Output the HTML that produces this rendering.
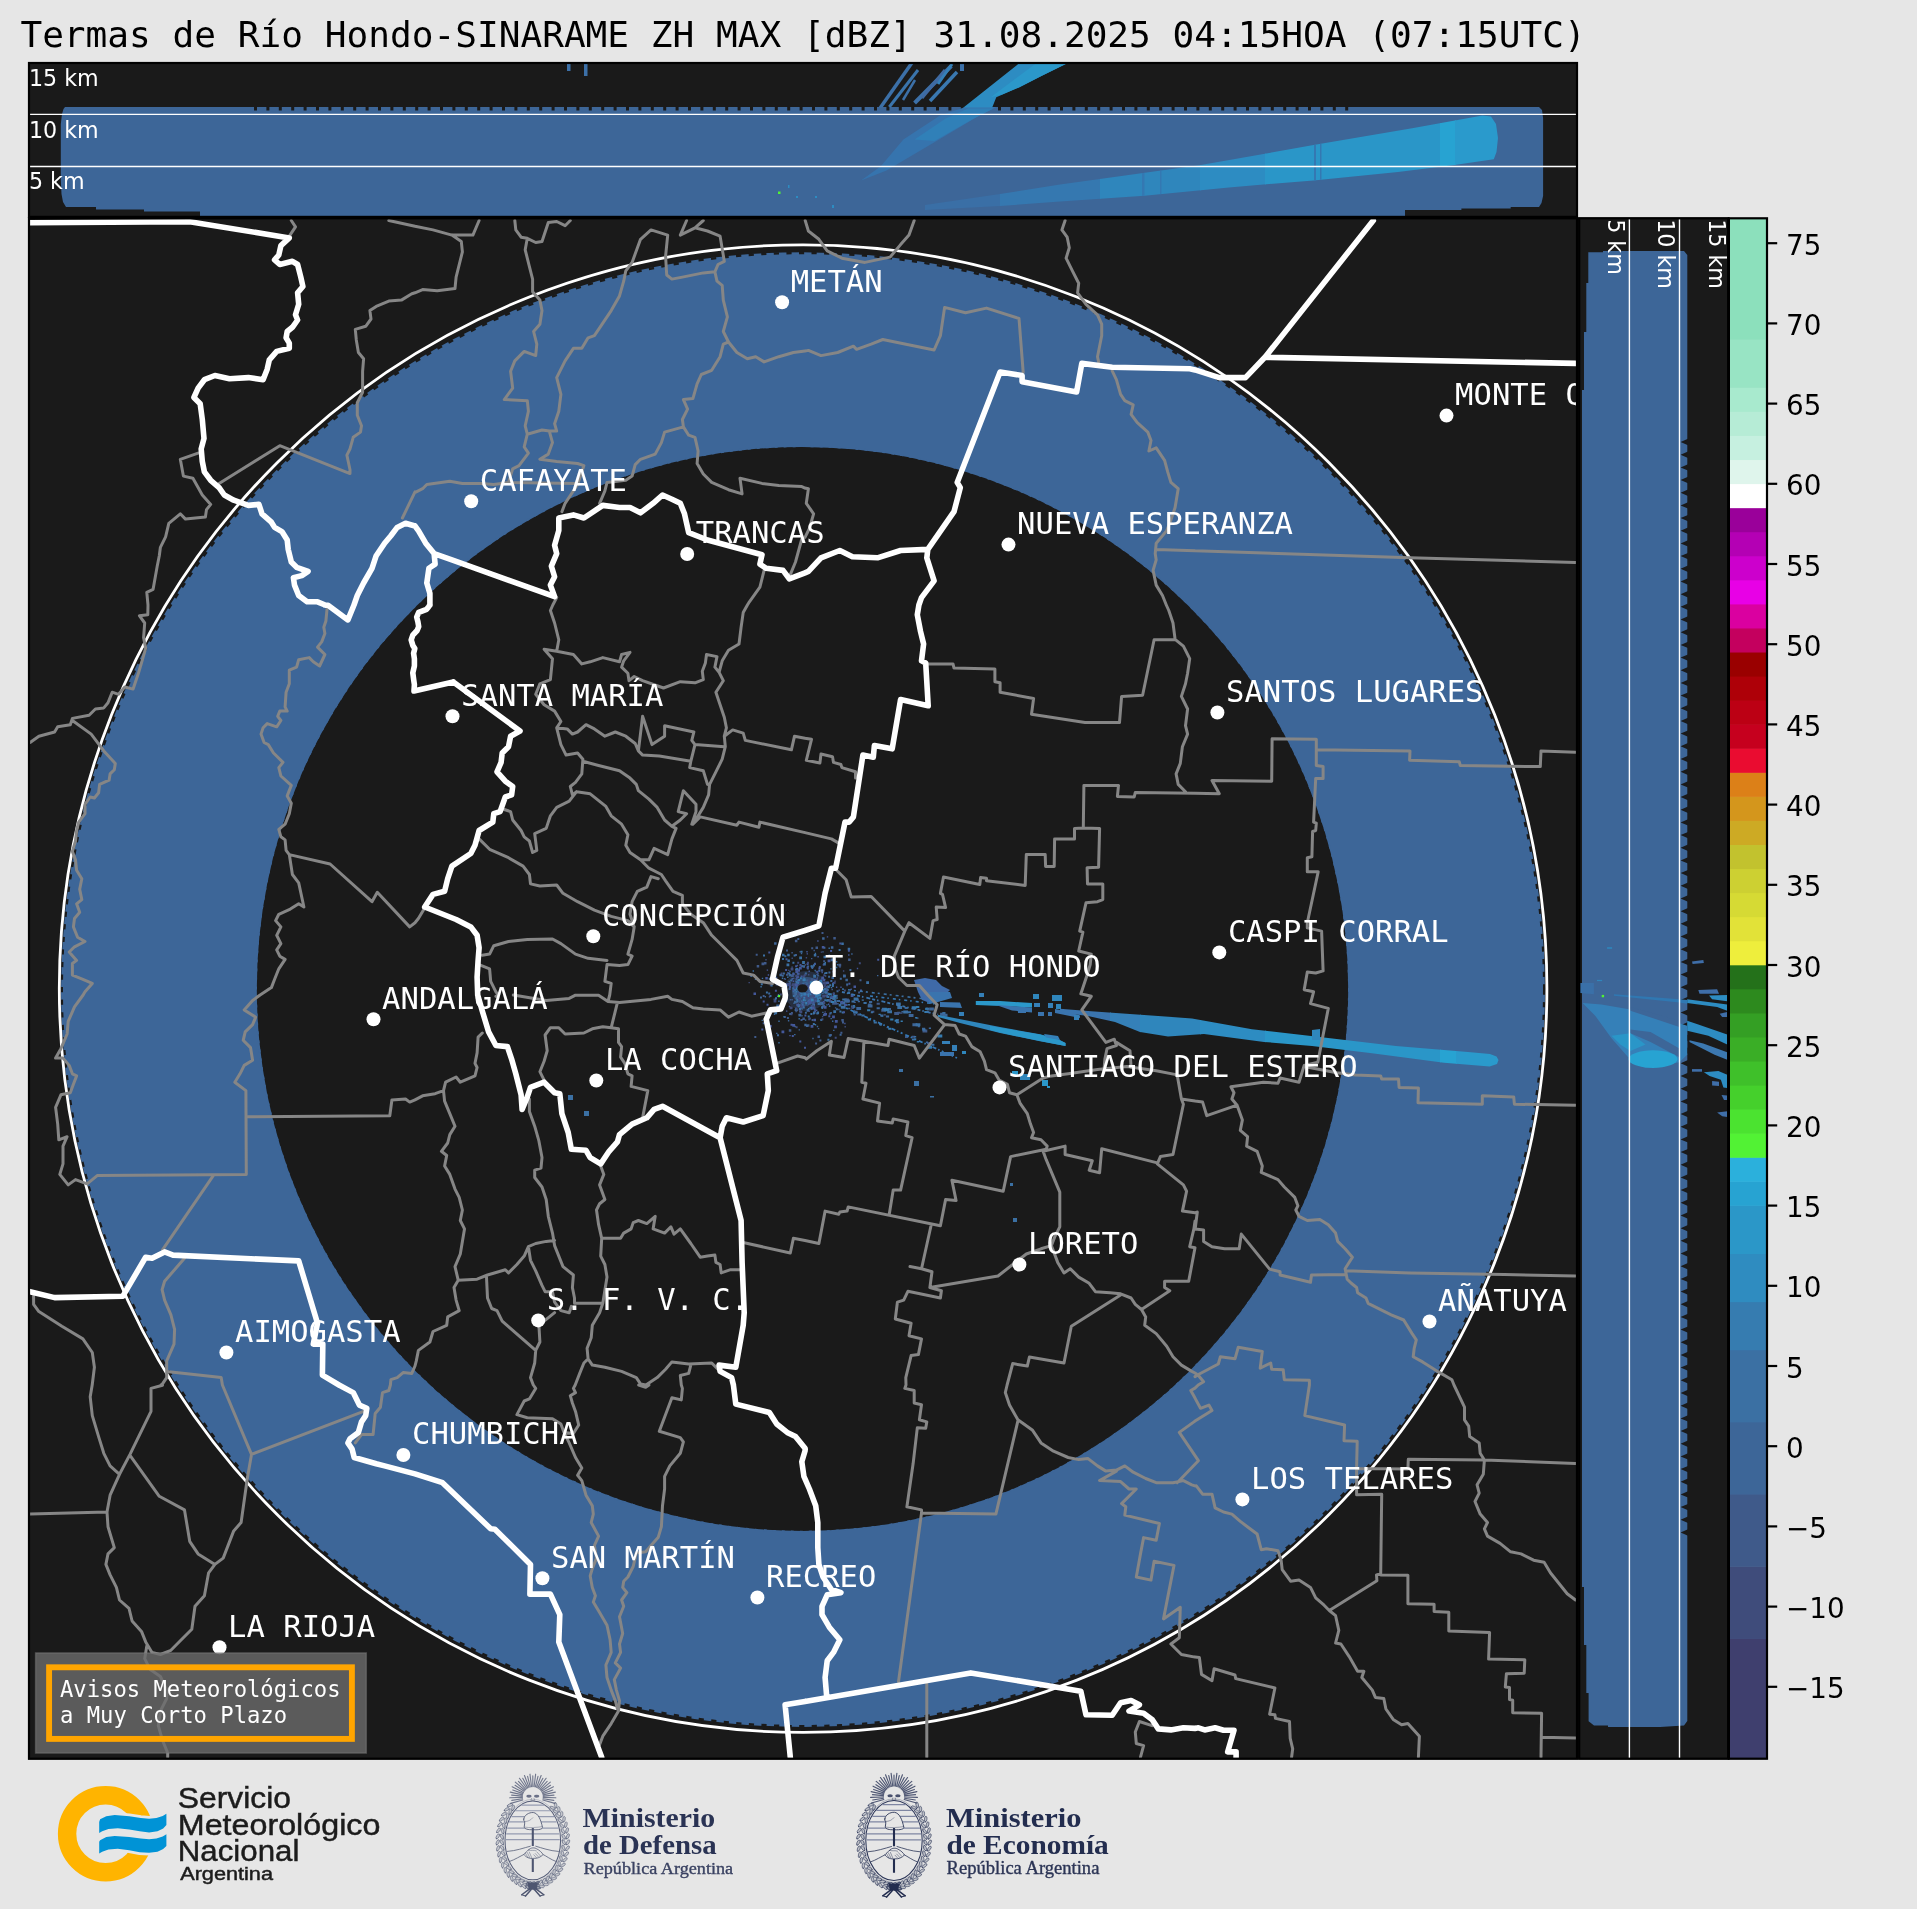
<!DOCTYPE html>
<html lang="es"><head><meta charset="utf-8"><title>Termas de Río Hondo-SINARAME ZH MAX [dBZ]</title>
<style>html,body{margin:0;padding:0;background:#e6e6e6}body{width:1917px;height:1909px;overflow:hidden}svg{display:block;will-change:transform}.mono{font-family:"DejaVu Sans Mono","Liberation Mono",monospace}.sans{font-family:"DejaVu Sans","Liberation Sans",sans-serif}.lsans{font-family:"Liberation Sans","DejaVu Sans",sans-serif}.lserif{font-family:"Liberation Serif","DejaVu Serif",serif}.city{font-size:30.56px;fill:#fff}.km{font-size:22.2px;fill:#fff}.tick{font-size:27.78px;fill:#000}</style></head><body>
<svg xmlns="http://www.w3.org/2000/svg" width="1917" height="1909" viewBox="0 0 1917 1909">
<rect width="1917" height="1909" fill="#e6e6e6"/>
<defs>
<clipPath id="cm"><rect x="29" y="218.3" width="1548" height="1540.4"/></clipPath>
<clipPath id="ct"><rect x="29" y="63" width="1548" height="154"/></clipPath>
<clipPath id="cr"><rect x="1579" y="218.3" width="150" height="1540.4"/></clipPath>
</defs>
<text class="mono" x="20.4" y="47.3" font-size="36.11" fill="#000" xml:space="preserve">Termas de Río Hondo-SINARAME ZH MAX [dBZ] 31.08.2025 04:15HOA (07:15UTC)</text>
<rect x="28" y="62" width="1550" height="156" fill="#1a1a1a"/>
<g clip-path="url(#ct)">
<polygon points="65.0,107.1 1539.0,107.1 1542.0,110.0 1543.1,118.0 1543.1,196.0 1541.5,203.0 1539.0,207.1 1510.7,207.1 1510.7,208.5 1461.4,208.5 1461.4,210.0 1405.0,210.0 1405.0,218.0 200.0,218.0 200.0,211.6 144.0,211.6 144.0,209.4 96.0,209.4 96.0,207.1 66.0,207.1 63.0,202.0 61.5,194.0 60.8,180.0 60.8,124.0 62.0,114.0 63.5,109.0" fill="#3d6698"/>
<path d="M254.0,106.5h3v4h-3zM266.4,106.5h3v4h-3zM278.8,106.5h3v4h-3zM291.2,106.5h3v4h-3zM303.6,106.5h3v4h-3zM316.0,106.5h3v4h-3zM328.4,106.5h3v4h-3zM340.8,106.5h3v4h-3zM353.2,106.5h3v4h-3zM365.6,106.5h3v4h-3zM378.0,106.5h3v4h-3zM390.4,106.5h3v4h-3zM402.8,106.5h3v4h-3zM415.2,106.5h3v4h-3zM427.6,106.5h3v4h-3zM440.0,106.5h3v4h-3zM452.4,106.5h3v4h-3zM464.8,106.5h3v4h-3zM477.2,106.5h3v4h-3zM489.6,106.5h3v4h-3zM502.0,106.5h3v4h-3zM514.4,106.5h3v4h-3zM526.8,106.5h3v4h-3zM539.2,106.5h3v4h-3zM551.6,106.5h3v4h-3zM564.0,106.5h3v4h-3zM576.4,106.5h3v4h-3zM588.8,106.5h3v4h-3zM601.2,106.5h3v4h-3zM613.6,106.5h3v4h-3zM626.0,106.5h3v4h-3zM638.4,106.5h3v4h-3zM650.8,106.5h3v4h-3zM663.2,106.5h3v4h-3zM675.6,106.5h3v4h-3zM688.0,106.5h3v4h-3zM700.4,106.5h3v4h-3zM712.8,106.5h3v4h-3zM725.2,106.5h3v4h-3zM737.6,106.5h3v4h-3zM750.0,106.5h3v4h-3zM762.4,106.5h3v4h-3zM774.8,106.5h3v4h-3zM787.2,106.5h3v4h-3zM799.6,106.5h3v4h-3zM812.0,106.5h3v4h-3zM824.4,106.5h3v4h-3zM836.8,106.5h3v4h-3zM849.2,106.5h3v4h-3zM861.6,106.5h3v4h-3zM874.0,106.5h3v4h-3zM886.4,106.5h3v4h-3zM898.8,106.5h3v4h-3zM911.2,106.5h3v4h-3zM923.6,106.5h3v4h-3zM936.0,106.5h3v4h-3zM948.4,106.5h3v4h-3zM960.8,106.5h3v4h-3zM973.2,106.5h3v4h-3zM985.6,106.5h3v4h-3zM998.0,106.5h3v4h-3zM1010.4,106.5h3v4h-3zM1022.8,106.5h3v4h-3zM1035.2,106.5h3v4h-3zM1047.6,106.5h3v4h-3zM1060.0,106.5h3v4h-3zM1072.4,106.5h3v4h-3zM1084.8,106.5h3v4h-3zM1097.2,106.5h3v4h-3zM1109.6,106.5h3v4h-3zM1122.0,106.5h3v4h-3zM1134.4,106.5h3v4h-3zM1146.8,106.5h3v4h-3zM1159.2,106.5h3v4h-3zM1171.6,106.5h3v4h-3zM1184.0,106.5h3v4h-3zM1196.4,106.5h3v4h-3zM1208.8,106.5h3v4h-3zM1221.2,106.5h3v4h-3zM1233.6,106.5h3v4h-3zM1246.0,106.5h3v4h-3zM1258.4,106.5h3v4h-3zM1270.8,106.5h3v4h-3zM1283.2,106.5h3v4h-3zM1295.6,106.5h3v4h-3zM1308.0,106.5h3v4h-3zM1320.4,106.5h3v4h-3zM1332.8,106.5h3v4h-3zM1345.2,106.5h3v4h-3z" fill="#1a1a1a"/>
<polygon points="861.1,180.4 880.8,166.3 903.4,139.5 940.0,115.6 965.4,107.1 996.3,107.1 979.4,115.6 934.4,142.3 886.5,170.5" fill="#3674ae"/>
<polygon points="914.6,139.5 945.6,118.4 968.2,108.5 993.5,108.5 973.8,118.4 934.4,140.9" fill="#3080b8"/>
<clipPath id="ctu"><rect x="29" y="63" width="1548" height="44.6"/></clipPath>
<g clip-path="url(#ctu)">
<polygon points="956.9,112.7 1018.9,63.5 1066.8,63.5 1041.4,76.1 1018.9,87.4 996.3,97.3 990.7,111.3" fill="#2d8cc2"/>
<polygon points="990.7,97.3 1024.5,71.9 1035.8,63.5 1066.8,63.5 1041.4,76.1 1018.9,87.4 1002.0,94.4" fill="#2b98ca"/>
<line x1="878.0" y1="111.0" x2="911.8" y2="63.0" stroke="#3c70a8" stroke-width="3.5"/>
<line x1="889.3" y1="107.0" x2="918.0" y2="70.0" stroke="#3a74ac" stroke-width="3.0"/>
<line x1="914.6" y1="103.0" x2="951.3" y2="66.0" stroke="#3c70a8" stroke-width="4.0"/>
<line x1="922.0" y1="98.0" x2="945.0" y2="70.0" stroke="#3f6aa2" stroke-width="3.0"/>
<line x1="930.0" y1="101.0" x2="957.0" y2="72.0" stroke="#3a78b0" stroke-width="3.5"/>
<line x1="903.0" y1="100.0" x2="915.0" y2="80.0" stroke="#3c70a8" stroke-width="2.5"/>
<line x1="938.0" y1="84.0" x2="952.0" y2="64.0" stroke="#3580b8" stroke-width="3.0"/>
<path d="M567,64h3.5v7h-3.5zM584,64h3.5v12h-3.5zM960,64h4v7h-4z" fill="#3c70a8"/>
</g>
<clipPath id="cbeam"><polygon points="925.0,205.0 1000.0,194.0 1060.0,184.6 1200.8,164.9 1313.5,145.1 1412.1,128.2 1482.5,115.6 1491.0,116.5 1496.0,124.0 1498.0,138.0 1496.5,152.0 1493.8,159.2 1454.4,164.9 1398.0,171.9 1313.5,180.4 1229.0,187.4 1144.5,195.8 1060.0,201.5 1000.0,206.0 925.0,210.0"/></clipPath>
<g clip-path="url(#cbeam)">
<rect x="920" y="100" width="81" height="120" fill="#3a6fa6"/>
<rect x="1000" y="100" width="101" height="120" fill="#3578b0"/>
<rect x="1100" y="100" width="101" height="120" fill="#2f86bc"/>
<rect x="1200" y="100" width="66" height="120" fill="#2d8cc2"/>
<rect x="1265" y="100" width="176" height="120" fill="#2a96c8"/>
<rect x="1440" y="100" width="16" height="120" fill="#27a3d2"/>
<rect x="1455" y="100" width="46" height="120" fill="#2a9acc"/>
<path d="M1142,100h2.5v120h-2.5zM1160,100h1.5v120h-1.5zM1314,100h2v120h-2zM1320,100h1.5v120h-1.5z" fill="#3478b2"/>
</g>
<rect x="778" y="191.5" width="2.5" height="2.5" fill="#52f234"/>
<path d="M832,205h2v3h-2zM788,185h1.5v3h-1.5zM796,196h2v2h-2zM815,196h2v2h-2z" fill="#2d8cc2"/>
</g>
<line x1="29" x2="1577" y1="114.4" y2="114.4" stroke="#fff" stroke-width="1.4"/>
<line x1="29" x2="1577" y1="166.5" y2="166.5" stroke="#fff" stroke-width="1.4"/>
<text class="sans km" x="28.9" y="85.6">15 km</text>
<text class="sans km" x="28.9" y="137.6">10 km</text>
<text class="sans km" x="28.9" y="189.1">5 km</text>
<rect x="28" y="217.5" width="1550" height="1542" fill="#1a1a1a"/>
<g clip-path="url(#cm)">
<path fill="#3d6698" fill-rule="evenodd" d="M61.0,989.6 a742.0,737.4 0 1,0 1484.0,0 a742.0,737.4 0 1,0 -1484.0,0 Z M256.8,988.9 a545.7,542.0 0 1,0 1091.4,0 a545.7,542.0 0 1,0 -1091.4,0 Z"/>
<ellipse cx="803" cy="989.6" rx="741.2" ry="736.6" fill="none" stroke="#1a1a1a" stroke-width="2.4" stroke-dasharray="5.2 7.4"/>
<ellipse cx="802.5" cy="988.9" rx="546.4" ry="542.7" fill="none" stroke="#3d6698" stroke-width="1.8" stroke-dasharray="3 6"/>
<ellipse cx="806" cy="991" rx="22" ry="20" fill="#3f5a8a" fill-opacity="0.35"/>
<ellipse cx="807" cy="991" rx="15" ry="14" fill="#3d6698" fill-opacity="0.6"/>
<ellipse cx="806" cy="990" rx="9" ry="8" fill="#3b70a3" fill-opacity="0.6"/>
<path d="M801.7,984.4h2.8v2.8h-2.8zM829.0,999.2h2.0v2.0h-2.0zM772.8,974.1h1.4v1.4h-1.4zM805.9,996.4h2.0v2.0h-2.0zM755.7,953.7h2.0v2.0h-2.0zM810.2,991.8h2.0v2.0h-2.0zM799.5,951.0h1.4v1.4h-1.4zM809.1,989.8h1.4v1.4h-1.4zM822.4,1004.8h2.8v2.8h-2.8zM838.4,963.8h2.8v2.8h-2.8zM800.2,1006.9h2.0v2.0h-2.0zM790.9,1012.1h2.0v2.0h-2.0zM805.3,995.0h2.8v2.8h-2.8zM813.6,991.6h2.0v2.0h-2.0zM845.6,1004.0h2.0v2.0h-2.0zM811.7,985.7h1.4v1.4h-1.4zM795.9,1001.1h2.0v2.0h-2.0zM816.4,1013.0h1.4v1.4h-1.4zM812.9,1000.6h1.4v1.4h-1.4zM821.3,978.2h1.4v1.4h-1.4zM802.5,993.4h2.0v2.0h-2.0zM796.2,1009.2h2.0v2.0h-2.0zM814.6,992.6h2.8v2.8h-2.8zM803.5,1004.7h1.4v1.4h-1.4zM799.0,1010.2h2.0v2.0h-2.0zM816.6,997.5h1.4v1.4h-1.4zM817.5,974.4h1.4v1.4h-1.4zM802.6,976.3h2.0v2.0h-2.0zM805.6,986.8h1.4v1.4h-1.4zM810.0,999.0h2.0v2.0h-2.0zM789.7,999.0h1.4v1.4h-1.4zM810.9,984.6h2.8v2.8h-2.8zM819.4,1039.5h2.0v2.0h-2.0zM817.1,1011.4h2.0v2.0h-2.0zM816.0,987.3h2.0v2.0h-2.0zM762.7,1022.3h2.0v2.0h-2.0zM798.6,1014.0h1.4v1.4h-1.4zM805.0,993.0h2.8v2.8h-2.8zM811.0,957.9h1.4v1.4h-1.4zM834.9,1007.2h1.4v1.4h-1.4zM796.4,981.6h1.4v1.4h-1.4zM788.8,982.8h2.0v2.0h-2.0zM823.1,991.2h2.0v2.0h-2.0zM818.0,999.6h1.4v1.4h-1.4zM817.0,993.7h2.0v2.0h-2.0zM815.4,971.2h1.4v1.4h-1.4zM808.3,982.9h2.8v2.8h-2.8zM810.7,978.2h2.8v2.8h-2.8zM844.5,975.3h1.4v1.4h-1.4zM803.8,986.6h2.0v2.0h-2.0zM820.5,1002.9h1.4v1.4h-1.4zM809.5,988.0h2.8v2.8h-2.8zM791.4,999.1h1.4v1.4h-1.4zM795.5,977.9h2.0v2.0h-2.0zM801.3,1015.0h1.4v1.4h-1.4zM793.4,992.3h1.4v1.4h-1.4zM810.2,987.2h2.0v2.0h-2.0zM796.4,979.1h1.4v1.4h-1.4zM804.4,998.8h2.0v2.0h-2.0zM809.9,992.4h1.4v1.4h-1.4zM811.0,965.5h2.8v2.8h-2.8zM761.5,962.4h2.8v2.8h-2.8zM815.1,1042.6h2.0v2.0h-2.0zM804.6,964.2h1.4v1.4h-1.4zM810.0,997.6h1.4v1.4h-1.4zM827.3,992.5h2.0v2.0h-2.0zM809.5,980.8h2.0v2.0h-2.0zM816.7,977.3h1.4v1.4h-1.4zM853.8,1010.2h1.4v1.4h-1.4zM786.0,973.7h2.0v2.0h-2.0zM820.0,999.1h1.4v1.4h-1.4zM791.0,974.2h2.8v2.8h-2.8zM782.2,1000.3h1.4v1.4h-1.4zM810.6,1007.9h2.0v2.0h-2.0zM813.4,964.0h1.4v1.4h-1.4zM798.9,990.1h2.0v2.0h-2.0zM815.9,986.4h2.8v2.8h-2.8zM782.9,995.3h2.0v2.0h-2.0zM754.3,1035.9h2.0v2.0h-2.0zM846.9,998.6h2.0v2.0h-2.0zM818.5,987.9h2.0v2.0h-2.0zM799.2,1003.9h2.0v2.0h-2.0zM793.0,977.7h1.4v1.4h-1.4zM809.3,985.8h2.0v2.0h-2.0zM812.0,995.6h2.0v2.0h-2.0zM808.9,984.3h1.4v1.4h-1.4zM838.2,1008.8h1.4v1.4h-1.4zM795.9,996.4h2.8v2.8h-2.8zM825.9,981.4h2.8v2.8h-2.8zM817.8,997.8h1.4v1.4h-1.4zM790.5,979.4h2.0v2.0h-2.0zM808.8,1017.5h2.0v2.0h-2.0zM820.2,997.3h2.0v2.0h-2.0zM807.1,980.0h1.4v1.4h-1.4zM811.6,997.0h1.4v1.4h-1.4zM796.0,980.9h2.0v2.0h-2.0zM824.9,975.3h1.4v1.4h-1.4zM812.8,986.3h2.0v2.0h-2.0zM809.9,995.3h2.0v2.0h-2.0zM813.3,999.7h1.4v1.4h-1.4zM813.6,980.1h2.0v2.0h-2.0zM820.0,1001.8h2.0v2.0h-2.0zM762.7,995.0h2.0v2.0h-2.0zM815.9,992.2h2.0v2.0h-2.0zM806.9,967.5h2.0v2.0h-2.0zM812.5,981.7h1.4v1.4h-1.4zM817.8,989.3h2.0v2.0h-2.0zM808.0,985.5h1.4v1.4h-1.4zM782.7,986.0h2.0v2.0h-2.0zM809.8,995.1h1.4v1.4h-1.4zM813.9,1006.8h1.4v1.4h-1.4zM801.2,985.0h2.0v2.0h-2.0zM810.1,984.7h2.0v2.0h-2.0zM796.7,964.8h1.4v1.4h-1.4zM811.0,1006.7h1.4v1.4h-1.4zM789.4,981.4h1.4v1.4h-1.4zM831.5,988.8h1.4v1.4h-1.4zM819.6,1002.4h2.8v2.8h-2.8zM841.6,943.1h1.4v1.4h-1.4zM829.7,996.6h2.5v2.5h-2.5zM848.1,958.6h2.5v2.5h-2.5zM833.3,936.9h2.5v2.5h-2.5zM787.6,972.6h1.4v1.4h-1.4zM788.8,1029.3h2.5v2.5h-2.5zM786.0,949.4h2.0v2.0h-2.0zM791.4,966.4h1.4v1.4h-1.4zM783.9,1016.1h2.0v2.0h-2.0zM795.0,954.1h2.0v2.0h-2.0zM813.1,1013.4h1.4v1.4h-1.4zM839.3,966.3h1.4v1.4h-1.4zM811.2,947.3h2.0v2.0h-2.0zM820.7,969.2h2.5v2.5h-2.5zM840.4,1031.7h2.0v2.0h-2.0zM783.9,999.8h2.5v2.5h-2.5zM794.9,939.7h2.5v2.5h-2.5zM817.9,1027.9h1.4v1.4h-1.4zM842.0,1021.5h2.0v2.0h-2.0zM817.5,1035.5h2.5v2.5h-2.5zM786.9,1017.0h2.0v2.0h-2.0zM800.5,1019.1h2.0v2.0h-2.0zM822.9,1014.0h2.0v2.0h-2.0zM797.3,938.0h2.0v2.0h-2.0zM844.6,998.3h2.5v2.5h-2.5zM829.0,1005.4h1.4v1.4h-1.4zM802.4,1017.6h2.5v2.5h-2.5zM806.9,1024.3h2.5v2.5h-2.5zM757.6,979.2h1.4v1.4h-1.4zM841.3,1019.1h2.5v2.5h-2.5zM815.5,946.4h2.5v2.5h-2.5zM853.7,1013.6h2.0v2.0h-2.0zM811.6,1019.0h2.0v2.0h-2.0zM821.5,932.1h2.0v2.0h-2.0zM813.5,949.8h1.4v1.4h-1.4zM818.8,966.1h2.0v2.0h-2.0zM764.0,962.0h2.5v2.5h-2.5zM756.7,964.9h2.5v2.5h-2.5zM858.1,991.5h2.0v2.0h-2.0zM859.5,979.2h2.0v2.0h-2.0zM791.4,952.0h1.4v1.4h-1.4zM795.4,1010.8h1.4v1.4h-1.4zM823.2,960.3h2.0v2.0h-2.0zM829.9,1034.0h2.0v2.0h-2.0zM854.4,1010.8h3.2v2.0h-3.2zM871.1,1010.8h3.2v2.0h-3.2zM911.7,1035.8h3.2v2.0h-3.2zM941.6,1013.7h2.2v1.4h-2.2zM905.0,1036.0h3.2v2.0h-3.2zM825.9,994.5h2.2v1.4h-2.2zM832.1,1001.7h4.8v3.0h-4.8zM922.5,1029.4h4.8v3.0h-4.8zM848.1,1007.8h2.2v1.4h-2.2zM894.2,1012.1h4.8v3.0h-4.8zM886.6,1026.9h2.2v1.4h-2.2zM845.2,999.4h4.8v3.0h-4.8zM853.7,1001.7h2.2v1.4h-2.2zM926.8,1042.3h3.2v2.0h-3.2zM827.0,999.1h3.2v2.0h-3.2zM834.6,994.8h3.2v2.0h-3.2zM876.6,1002.7h3.2v2.0h-3.2zM897.1,1011.8h3.2v2.0h-3.2zM900.3,1012.4h2.2v1.4h-2.2zM857.3,1013.4h3.2v2.0h-3.2zM836.5,1003.0h2.2v1.4h-2.2zM881.2,1008.7h4.8v3.0h-4.8zM832.7,995.7h3.2v2.0h-3.2zM883.6,1014.2h2.2v1.4h-2.2z" fill="#3f5a8a"/>
<path d="M797.3,998.8h2.8v2.8h-2.8zM768.7,977.8h2.0v2.0h-2.0zM797.8,989.4h2.0v2.0h-2.0zM832.0,1020.6h1.4v1.4h-1.4zM803.8,989.1h2.0v2.0h-2.0zM797.8,984.5h2.8v2.8h-2.8zM812.2,981.0h1.4v1.4h-1.4zM788.6,987.9h2.0v2.0h-2.0zM787.9,1020.1h1.4v1.4h-1.4zM813.1,982.1h1.4v1.4h-1.4zM801.2,1000.5h1.4v1.4h-1.4zM835.9,1008.2h2.0v2.0h-2.0zM812.6,985.9h2.0v2.0h-2.0zM810.3,1001.2h1.4v1.4h-1.4zM773.8,1013.7h1.4v1.4h-1.4zM807.7,999.4h2.0v2.0h-2.0zM750.3,975.0h2.0v2.0h-2.0zM830.6,958.5h2.8v2.8h-2.8zM817.3,975.0h1.4v1.4h-1.4zM812.1,988.3h2.8v2.8h-2.8zM807.9,1001.5h2.8v2.8h-2.8zM782.1,1003.6h2.8v2.8h-2.8zM809.8,989.6h1.4v1.4h-1.4zM783.2,983.3h1.4v1.4h-1.4zM795.0,968.6h2.0v2.0h-2.0zM816.2,1000.8h1.4v1.4h-1.4zM805.6,991.9h2.8v2.8h-2.8zM813.8,985.0h2.0v2.0h-2.0zM799.1,989.4h1.4v1.4h-1.4zM806.0,1025.0h2.0v2.0h-2.0zM806.6,987.8h2.0v2.0h-2.0zM804.8,987.9h2.8v2.8h-2.8zM843.0,974.6h2.8v2.8h-2.8zM810.0,998.7h2.0v2.0h-2.0zM818.4,980.8h1.4v1.4h-1.4zM813.5,993.8h2.0v2.0h-2.0zM784.7,989.3h1.4v1.4h-1.4zM815.8,987.4h2.0v2.0h-2.0zM795.0,1007.7h1.4v1.4h-1.4zM798.5,1013.7h2.8v2.8h-2.8zM797.1,995.3h1.4v1.4h-1.4zM822.2,1011.7h1.4v1.4h-1.4zM823.6,1013.4h2.0v2.0h-2.0zM806.6,994.4h1.4v1.4h-1.4zM795.0,980.4h1.4v1.4h-1.4zM794.3,992.1h2.8v2.8h-2.8zM781.7,1002.4h2.0v2.0h-2.0zM805.9,986.8h2.8v2.8h-2.8zM806.6,1008.9h2.8v2.8h-2.8zM806.4,979.6h2.0v2.0h-2.0zM776.3,1004.4h2.8v2.8h-2.8zM794.6,1009.0h2.0v2.0h-2.0zM877.0,974.9h1.4v1.4h-1.4zM807.3,993.7h2.8v2.8h-2.8zM802.7,990.1h2.0v2.0h-2.0zM828.1,975.7h2.0v2.0h-2.0zM813.8,1008.5h2.0v2.0h-2.0zM786.0,984.4h2.0v2.0h-2.0zM829.3,1012.5h2.0v2.0h-2.0zM836.5,990.3h2.0v2.0h-2.0zM777.8,993.9h1.4v1.4h-1.4zM795.6,997.6h1.4v1.4h-1.4zM793.3,1002.5h1.4v1.4h-1.4zM834.3,998.8h1.4v1.4h-1.4zM806.0,986.7h1.4v1.4h-1.4zM811.5,986.5h2.0v2.0h-2.0zM816.6,984.8h2.8v2.8h-2.8zM822.1,1005.8h1.4v1.4h-1.4zM760.0,996.4h2.0v2.0h-2.0zM826.2,986.6h2.0v2.0h-2.0zM826.1,995.5h2.0v2.0h-2.0zM800.9,1000.3h1.4v1.4h-1.4zM849.4,969.0h2.0v2.0h-2.0zM814.7,988.8h2.0v2.0h-2.0zM796.0,986.1h2.0v2.0h-2.0zM796.7,1004.0h2.8v2.8h-2.8zM839.8,977.7h2.0v2.0h-2.0zM843.4,974.5h2.0v2.0h-2.0zM826.8,989.1h2.0v2.0h-2.0zM809.7,988.2h1.4v1.4h-1.4zM818.6,1002.9h2.0v2.0h-2.0zM805.9,987.9h1.4v1.4h-1.4zM801.7,992.5h1.4v1.4h-1.4zM801.4,1008.4h1.4v1.4h-1.4zM821.7,1007.5h1.4v1.4h-1.4zM824.6,982.0h2.0v2.0h-2.0zM782.9,972.5h2.0v2.0h-2.0zM796.9,972.7h2.0v2.0h-2.0zM810.3,994.5h1.4v1.4h-1.4zM816.4,973.7h1.4v1.4h-1.4zM799.8,985.0h2.0v2.0h-2.0zM794.2,994.4h2.0v2.0h-2.0zM777.0,954.8h2.0v2.0h-2.0zM830.3,979.9h2.0v2.0h-2.0zM795.5,984.7h1.4v1.4h-1.4zM794.9,983.8h2.0v2.0h-2.0zM803.1,1001.5h1.4v1.4h-1.4zM803.2,977.6h2.0v2.0h-2.0zM794.0,1000.8h2.8v2.8h-2.8zM768.2,992.5h2.0v2.0h-2.0zM819.4,1001.7h2.0v2.0h-2.0zM815.6,994.0h1.4v1.4h-1.4zM798.6,1029.2h1.4v1.4h-1.4zM801.5,990.5h2.0v2.0h-2.0zM816.9,986.7h1.4v1.4h-1.4zM813.9,962.7h2.0v2.0h-2.0zM804.9,1011.8h2.0v2.0h-2.0zM769.5,995.0h2.0v2.0h-2.0zM764.6,996.1h1.4v1.4h-1.4zM807.1,965.5h2.0v2.0h-2.0zM822.3,951.2h1.4v1.4h-1.4zM828.7,1034.3h2.5v2.5h-2.5zM821.2,1006.3h2.0v2.0h-2.0zM789.3,970.8h1.4v1.4h-1.4zM823.4,946.7h2.0v2.0h-2.0zM773.7,972.6h2.5v2.5h-2.5zM830.5,1017.9h1.4v1.4h-1.4zM839.6,1033.7h2.0v2.0h-2.0zM774.1,942.2h2.5v2.5h-2.5zM800.8,952.9h1.4v1.4h-1.4zM831.5,976.5h2.5v2.5h-2.5zM754.8,978.7h1.4v1.4h-1.4zM833.1,1029.7h1.4v1.4h-1.4zM818.2,969.8h2.0v2.0h-2.0zM822.1,937.2h2.5v2.5h-2.5zM804.3,1023.7h2.5v2.5h-2.5zM776.8,981.4h1.4v1.4h-1.4zM789.2,1013.1h2.0v2.0h-2.0zM802.5,965.3h2.5v2.5h-2.5zM816.8,1025.8h1.4v1.4h-1.4zM827.2,982.1h2.0v2.0h-2.0zM812.3,1037.8h1.4v1.4h-1.4zM783.8,978.1h1.4v1.4h-1.4zM788.6,974.1h2.5v2.5h-2.5zM777.0,1034.3h2.0v2.0h-2.0zM811.6,967.5h1.4v1.4h-1.4zM790.5,1013.0h1.4v1.4h-1.4zM800.8,965.0h2.0v2.0h-2.0zM830.9,946.3h2.5v2.5h-2.5zM811.1,965.9h2.0v2.0h-2.0zM779.5,973.7h2.5v2.5h-2.5zM761.6,1019.7h1.4v1.4h-1.4zM828.4,971.4h2.0v2.0h-2.0zM845.4,978.8h2.5v2.5h-2.5zM851.2,953.3h1.4v1.4h-1.4zM781.8,974.7h2.0v2.0h-2.0zM776.1,1032.7h1.4v1.4h-1.4zM856.3,1006.9h4.8v3.0h-4.8zM885.9,1015.4h3.2v2.0h-3.2zM940.1,1012.8h4.8v3.0h-4.8zM908.7,1013.9h4.8v3.0h-4.8zM928.8,1027.6h2.2v1.4h-2.2zM880.1,1014.5h3.2v2.0h-3.2zM887.8,1007.9h3.2v2.0h-3.2zM917.7,1025.9h2.2v1.4h-2.2zM904.6,1006.9h3.2v2.0h-3.2zM876.6,1007.2h3.2v2.0h-3.2zM832.8,996.1h3.2v2.0h-3.2zM922.0,1027.7h3.2v2.0h-3.2zM855.5,998.8h3.2v2.0h-3.2zM916.3,1017.4h2.2v1.4h-2.2zM895.7,1018.9h3.2v2.0h-3.2zM844.3,999.6h4.8v3.0h-4.8zM857.8,1000.8h2.2v1.4h-2.2zM837.0,1000.0h3.2v2.0h-3.2zM901.4,1011.1h2.2v1.4h-2.2zM867.7,1004.4h4.8v3.0h-4.8zM925.9,1041.5h2.2v1.4h-2.2zM942.7,1013.8h4.8v3.0h-4.8zM925.6,1011.0h3.2v2.0h-3.2zM832.3,997.9h3.2v2.0h-3.2zM868.2,1003.4h3.2v2.0h-3.2zM869.0,1001.0h3.2v2.0h-3.2zM912.4,1023.3h4.8v3.0h-4.8zM929.1,1007.4h4.8v3.0h-4.8z" fill="#3d6698"/>
<path d="M812.9,964.6h2.0v2.0h-2.0zM802.5,978.2h2.8v2.8h-2.8zM770.7,984.6h2.0v2.0h-2.0zM788.5,980.8h1.4v1.4h-1.4zM791.6,978.1h1.4v1.4h-1.4zM848.1,992.6h1.4v1.4h-1.4zM821.5,988.8h1.4v1.4h-1.4zM798.5,1018.1h1.4v1.4h-1.4zM835.9,966.8h1.4v1.4h-1.4zM814.8,1024.0h1.4v1.4h-1.4zM804.9,1019.4h1.4v1.4h-1.4zM804.7,999.8h1.4v1.4h-1.4zM807.9,1007.9h1.4v1.4h-1.4zM827.4,995.9h2.0v2.0h-2.0zM792.8,994.9h2.0v2.0h-2.0zM817.6,1003.0h2.0v2.0h-2.0zM824.3,999.2h2.0v2.0h-2.0zM765.9,991.4h2.0v2.0h-2.0zM802.9,986.2h1.4v1.4h-1.4zM808.7,993.2h2.8v2.8h-2.8zM828.8,1005.4h1.4v1.4h-1.4zM817.4,989.1h1.4v1.4h-1.4zM829.2,984.2h2.0v2.0h-2.0zM824.6,991.0h2.0v2.0h-2.0zM817.0,995.4h1.4v1.4h-1.4zM821.8,990.1h2.0v2.0h-2.0zM811.7,990.5h2.0v2.0h-2.0zM826.3,1004.2h1.4v1.4h-1.4zM806.3,984.0h2.0v2.0h-2.0zM812.8,1023.1h2.0v2.0h-2.0zM793.2,995.7h1.4v1.4h-1.4zM805.9,993.8h2.0v2.0h-2.0zM807.9,997.3h1.4v1.4h-1.4zM813.8,989.2h1.4v1.4h-1.4zM808.9,984.0h1.4v1.4h-1.4zM833.3,1010.3h2.8v2.8h-2.8zM792.8,990.9h1.4v1.4h-1.4zM823.9,978.7h1.4v1.4h-1.4zM799.0,1008.0h2.0v2.0h-2.0zM812.2,1003.6h2.8v2.8h-2.8zM804.7,992.4h1.4v1.4h-1.4zM774.9,998.7h1.4v1.4h-1.4zM824.8,991.0h2.8v2.8h-2.8zM804.5,991.7h2.8v2.8h-2.8zM807.2,985.7h2.0v2.0h-2.0zM790.3,1012.9h1.4v1.4h-1.4zM808.5,987.1h2.8v2.8h-2.8zM760.4,986.0h1.4v1.4h-1.4zM812.9,1005.3h1.4v1.4h-1.4zM782.1,1004.8h1.4v1.4h-1.4zM793.6,988.8h2.8v2.8h-2.8zM792.4,961.8h2.0v2.0h-2.0zM813.1,982.8h2.0v2.0h-2.0zM796.0,980.8h2.8v2.8h-2.8zM807.3,992.9h2.0v2.0h-2.0zM810.5,965.3h2.0v2.0h-2.0zM802.4,992.7h2.0v2.0h-2.0zM800.9,1003.5h2.8v2.8h-2.8zM830.8,986.9h1.4v1.4h-1.4zM822.1,992.7h1.4v1.4h-1.4zM802.5,991.8h1.4v1.4h-1.4zM823.9,987.8h2.8v2.8h-2.8zM813.8,987.2h2.8v2.8h-2.8zM805.3,984.0h2.8v2.8h-2.8zM821.2,1006.6h2.0v2.0h-2.0zM790.3,979.5h1.4v1.4h-1.4zM798.6,1004.6h1.4v1.4h-1.4zM817.3,983.1h1.4v1.4h-1.4zM786.1,1000.2h1.4v1.4h-1.4zM813.3,974.6h1.4v1.4h-1.4zM784.4,955.3h2.0v2.0h-2.0zM812.2,990.0h2.8v2.8h-2.8zM812.9,992.4h2.0v2.0h-2.0zM807.4,993.4h1.4v1.4h-1.4zM808.8,990.4h1.4v1.4h-1.4zM814.7,952.7h1.4v1.4h-1.4zM802.1,961.1h2.8v2.8h-2.8zM836.9,964.0h1.4v1.4h-1.4zM866.2,981.2h2.8v2.8h-2.8zM793.5,988.4h1.4v1.4h-1.4zM831.9,985.1h2.0v2.0h-2.0zM796.3,999.0h2.0v2.0h-2.0zM815.0,991.1h2.0v2.0h-2.0zM804.8,972.5h2.0v2.0h-2.0zM774.3,1011.5h2.8v2.8h-2.8zM824.6,962.1h1.4v1.4h-1.4zM826.8,996.4h1.4v1.4h-1.4zM786.5,963.4h2.8v2.8h-2.8zM830.3,968.2h1.4v1.4h-1.4zM807.7,1015.6h2.0v2.0h-2.0zM809.4,1006.8h2.0v2.0h-2.0zM830.4,1012.1h1.4v1.4h-1.4zM775.0,997.3h2.0v2.0h-2.0zM811.8,985.2h2.8v2.8h-2.8zM781.8,977.6h1.4v1.4h-1.4zM782.9,991.4h2.8v2.8h-2.8zM796.7,1000.6h1.4v1.4h-1.4zM827.0,985.4h2.8v2.8h-2.8zM813.2,974.9h2.8v2.8h-2.8zM797.1,980.1h1.4v1.4h-1.4zM803.5,983.1h2.8v2.8h-2.8zM821.5,1001.9h2.8v2.8h-2.8zM799.2,956.4h2.8v2.8h-2.8zM814.5,969.8h1.4v1.4h-1.4zM815.4,993.6h1.4v1.4h-1.4zM797.9,1005.4h2.0v2.0h-2.0zM809.8,990.8h1.4v1.4h-1.4zM810.1,1006.7h2.0v2.0h-2.0zM800.5,996.2h1.4v1.4h-1.4zM802.0,1005.6h2.8v2.8h-2.8zM825.4,971.9h2.0v2.0h-2.0zM805.3,1004.3h1.4v1.4h-1.4zM792.4,987.2h2.0v2.0h-2.0zM773.5,975.2h2.8v2.8h-2.8zM828.5,947.6h1.4v1.4h-1.4zM797.0,987.6h1.4v1.4h-1.4zM778.2,1000.5h1.4v1.4h-1.4zM824.1,972.5h1.4v1.4h-1.4zM828.5,954.4h1.4v1.4h-1.4zM820.3,1019.0h2.0v2.0h-2.0zM770.8,976.9h2.0v2.0h-2.0zM847.7,947.8h2.5v2.5h-2.5zM782.0,958.0h2.0v2.0h-2.0zM838.7,1003.9h2.5v2.5h-2.5zM761.8,977.7h1.4v1.4h-1.4zM823.3,963.1h2.5v2.5h-2.5zM787.4,959.4h2.5v2.5h-2.5zM839.4,1010.6h2.0v2.0h-2.0zM760.8,983.3h2.0v2.0h-2.0zM812.9,1011.6h2.5v2.5h-2.5zM816.5,1011.8h2.5v2.5h-2.5zM832.0,983.0h2.0v2.0h-2.0zM794.4,934.2h2.0v2.0h-2.0zM841.3,942.5h2.5v2.5h-2.5zM765.1,1019.0h1.4v1.4h-1.4zM795.9,968.1h2.5v2.5h-2.5zM847.7,991.6h2.5v2.5h-2.5zM841.7,1011.6h2.0v2.0h-2.0zM838.6,948.9h2.0v2.0h-2.0zM834.1,999.5h2.5v2.5h-2.5zM752.6,970.3h1.4v1.4h-1.4zM826.3,999.2h2.5v2.5h-2.5zM810.4,1012.9h2.0v2.0h-2.0zM787.2,953.7h2.5v2.5h-2.5zM778.3,1042.1h1.4v1.4h-1.4zM800.6,950.7h2.0v2.0h-2.0zM776.9,995.5h1.4v1.4h-1.4zM787.1,976.5h1.4v1.4h-1.4zM783.3,1016.0h1.4v1.4h-1.4zM793.6,954.4h2.0v2.0h-2.0zM787.4,959.6h1.4v1.4h-1.4zM792.4,972.5h2.0v2.0h-2.0zM778.3,1020.6h1.4v1.4h-1.4zM823.5,955.7h2.5v2.5h-2.5zM813.8,953.9h2.5v2.5h-2.5zM794.5,1025.8h1.4v1.4h-1.4zM794.1,1033.9h1.4v1.4h-1.4zM827.4,1038.8h2.0v2.0h-2.0zM768.1,1034.4h1.4v1.4h-1.4zM763.0,954.4h2.0v2.0h-2.0zM782.0,953.7h2.5v2.5h-2.5zM788.3,972.5h2.0v2.0h-2.0zM846.2,983.5h2.0v2.0h-2.0zM835.9,961.0h1.4v1.4h-1.4zM879.0,1023.0h3.2v2.0h-3.2zM840.8,1005.8h4.8v3.0h-4.8zM926.9,1007.9h2.2v1.4h-2.2zM840.2,1001.4h4.8v3.0h-4.8zM851.5,1000.5h3.2v2.0h-3.2zM896.0,1002.5h4.8v3.0h-4.8zM925.5,1007.5h3.2v2.0h-3.2zM931.2,1043.8h3.2v2.0h-3.2zM870.8,1011.8h2.2v1.4h-2.2zM847.8,1004.1h2.2v1.4h-2.2zM896.0,1021.3h3.2v2.0h-3.2zM830.6,995.9h4.8v3.0h-4.8zM911.9,1038.6h3.2v2.0h-3.2zM914.0,1036.1h2.2v1.4h-2.2zM861.4,1014.6h3.2v2.0h-3.2zM852.9,1005.0h2.2v1.4h-2.2zM897.3,1006.1h4.8v3.0h-4.8zM907.8,1011.3h3.2v2.0h-3.2zM831.1,996.3h3.2v2.0h-3.2zM842.2,998.5h3.2v2.0h-3.2zM879.6,1024.3h2.2v1.4h-2.2zM926.7,1009.1h2.2v1.4h-2.2zM942.3,1011.9h3.2v2.0h-3.2zM835.7,997.3h2.2v1.4h-2.2zM881.1,1015.4h2.2v1.4h-2.2zM873.7,1021.6h3.2v2.0h-3.2zM915.6,1023.2h4.8v3.0h-4.8zM851.1,1005.5h3.2v2.0h-3.2zM887.2,1010.3h4.8v3.0h-4.8zM861.7,999.4h2.2v1.4h-2.2zM863.5,1002.1h3.2v2.0h-3.2zM922.3,1028.7h3.2v2.0h-3.2zM903.2,1010.5h4.8v3.0h-4.8zM853.6,997.5h4.8v3.0h-4.8zM882.0,1007.8h4.8v3.0h-4.8zM853.1,1011.6h3.2v2.0h-3.2z" fill="#3b70a3"/>
<path d="M801.4,984.7h2.8v2.8h-2.8zM792.3,1023.9h2.8v2.8h-2.8zM840.5,1001.0h2.8v2.8h-2.8zM813.7,996.2h2.0v2.0h-2.0zM813.6,987.1h2.8v2.8h-2.8zM815.6,983.2h2.0v2.0h-2.0zM828.4,993.6h2.0v2.0h-2.0zM808.5,994.0h2.0v2.0h-2.0zM818.4,967.5h2.0v2.0h-2.0zM813.8,978.8h2.0v2.0h-2.0zM795.3,970.3h2.8v2.8h-2.8zM786.0,1010.4h1.4v1.4h-1.4zM812.5,1001.9h2.0v2.0h-2.0zM812.0,1006.5h2.8v2.8h-2.8zM804.9,989.1h1.4v1.4h-1.4zM810.9,987.3h2.0v2.0h-2.0zM834.9,1020.0h2.8v2.8h-2.8zM835.9,986.6h1.4v1.4h-1.4zM807.3,992.6h1.4v1.4h-1.4zM839.3,942.4h2.0v2.0h-2.0zM808.7,987.6h2.8v2.8h-2.8zM832.1,1015.4h2.8v2.8h-2.8zM804.8,984.9h2.0v2.0h-2.0zM810.7,1005.3h1.4v1.4h-1.4zM848.4,982.8h2.0v2.0h-2.0zM796.4,1004.1h2.0v2.0h-2.0zM796.1,975.5h2.8v2.8h-2.8zM814.1,1010.3h2.0v2.0h-2.0zM788.8,1005.8h1.4v1.4h-1.4zM799.3,1040.6h2.0v2.0h-2.0zM819.5,986.0h2.8v2.8h-2.8zM806.8,985.6h1.4v1.4h-1.4zM802.3,1004.8h1.4v1.4h-1.4zM781.5,1030.4h2.8v2.8h-2.8zM799.0,966.7h2.8v2.8h-2.8zM817.3,972.5h1.4v1.4h-1.4zM819.1,984.8h1.4v1.4h-1.4zM802.7,986.4h2.0v2.0h-2.0zM817.0,990.2h1.4v1.4h-1.4zM791.8,978.0h1.4v1.4h-1.4zM793.2,986.5h1.4v1.4h-1.4zM808.2,1001.3h2.0v2.0h-2.0zM810.0,1001.5h1.4v1.4h-1.4zM796.7,988.5h1.4v1.4h-1.4zM787.0,972.2h1.4v1.4h-1.4zM785.6,983.5h2.0v2.0h-2.0zM832.7,993.1h2.0v2.0h-2.0zM828.3,1015.2h2.0v2.0h-2.0zM819.7,979.5h2.8v2.8h-2.8zM789.0,986.0h2.0v2.0h-2.0zM821.3,976.4h2.8v2.8h-2.8zM775.9,977.1h1.4v1.4h-1.4zM808.5,970.6h1.4v1.4h-1.4zM804.5,992.3h1.4v1.4h-1.4zM822.7,964.1h1.4v1.4h-1.4zM774.9,960.7h2.0v2.0h-2.0zM800.6,975.4h2.0v2.0h-2.0zM799.5,964.1h2.0v2.0h-2.0zM805.0,987.9h2.0v2.0h-2.0zM819.6,984.5h1.4v1.4h-1.4zM816.1,970.7h2.0v2.0h-2.0zM838.5,989.4h1.4v1.4h-1.4zM804.4,1014.5h2.0v2.0h-2.0zM823.2,979.1h2.0v2.0h-2.0zM833.4,970.1h2.0v2.0h-2.0zM823.9,1012.9h2.8v2.8h-2.8zM797.6,972.7h2.0v2.0h-2.0zM811.4,1000.4h1.4v1.4h-1.4zM767.7,974.3h1.4v1.4h-1.4zM832.6,981.9h2.0v2.0h-2.0zM797.6,980.7h2.0v2.0h-2.0zM784.3,1000.6h2.0v2.0h-2.0zM823.8,1006.0h2.8v2.8h-2.8zM810.5,1000.9h1.4v1.4h-1.4zM816.5,991.2h2.8v2.8h-2.8zM804.4,988.7h2.0v2.0h-2.0zM816.2,978.5h1.4v1.4h-1.4zM801.6,987.4h2.0v2.0h-2.0zM810.6,1024.9h2.8v2.8h-2.8zM827.6,959.5h2.8v2.8h-2.8zM800.2,985.1h1.4v1.4h-1.4zM807.7,1003.4h1.4v1.4h-1.4zM824.3,984.3h1.4v1.4h-1.4zM822.6,1001.0h2.0v2.0h-2.0zM877.2,958.7h2.0v2.0h-2.0zM809.5,985.0h1.4v1.4h-1.4zM795.1,983.6h2.8v2.8h-2.8zM806.6,953.2h1.4v1.4h-1.4zM850.7,994.1h2.8v2.8h-2.8zM808.7,1001.0h2.8v2.8h-2.8zM856.8,967.8h1.4v1.4h-1.4zM808.5,985.1h2.0v2.0h-2.0zM792.6,973.0h2.0v2.0h-2.0zM823.1,978.9h2.0v2.0h-2.0zM804.4,993.5h2.8v2.8h-2.8zM766.5,1003.7h2.0v2.0h-2.0zM819.2,980.4h2.0v2.0h-2.0zM792.8,980.6h1.4v1.4h-1.4zM809.0,999.1h2.8v2.8h-2.8zM825.0,1013.1h2.0v2.0h-2.0zM793.8,984.0h1.4v1.4h-1.4zM807.3,986.7h2.0v2.0h-2.0zM820.5,982.8h2.0v2.0h-2.0zM806.2,987.2h2.0v2.0h-2.0zM814.5,999.5h2.0v2.0h-2.0zM787.4,983.3h2.8v2.8h-2.8zM798.7,997.8h2.0v2.0h-2.0zM795.2,965.3h2.0v2.0h-2.0zM817.2,940.3h1.4v1.4h-1.4zM829.1,1000.6h2.0v2.0h-2.0zM768.3,951.6h2.0v2.0h-2.0zM801.7,1001.6h2.0v2.0h-2.0zM801.2,988.4h2.0v2.0h-2.0zM840.3,986.5h1.4v1.4h-1.4zM813.3,992.0h1.4v1.4h-1.4zM816.2,991.4h2.8v2.8h-2.8zM798.8,991.7h1.4v1.4h-1.4zM825.4,989.8h2.0v2.0h-2.0zM818.4,990.8h1.4v1.4h-1.4zM809.9,987.8h2.0v2.0h-2.0zM831.0,995.9h2.0v2.0h-2.0zM817.1,983.9h2.0v2.0h-2.0zM807.1,1001.0h1.4v1.4h-1.4zM831.0,995.7h2.0v2.0h-2.0zM834.1,1025.5h2.8v2.8h-2.8zM792.7,989.8h1.4v1.4h-1.4zM797.5,969.3h2.5v2.5h-2.5zM765.3,977.1h2.5v2.5h-2.5zM790.5,1023.8h2.0v2.0h-2.0zM761.3,1028.4h2.0v2.0h-2.0zM774.9,989.8h2.0v2.0h-2.0zM771.1,976.5h2.5v2.5h-2.5zM850.5,988.5h1.4v1.4h-1.4zM785.7,933.7h2.0v2.0h-2.0zM804.0,1046.8h2.0v2.0h-2.0zM806.5,966.4h2.0v2.0h-2.0zM769.2,1024.9h2.5v2.5h-2.5zM762.7,1000.4h2.0v2.0h-2.0zM768.8,996.2h1.4v1.4h-1.4zM828.0,1003.6h1.4v1.4h-1.4zM844.0,1003.6h2.5v2.5h-2.5zM791.8,1035.0h2.0v2.0h-2.0zM789.3,1034.9h1.4v1.4h-1.4zM817.4,956.0h1.4v1.4h-1.4zM813.5,1018.7h2.5v2.5h-2.5zM821.5,971.9h1.4v1.4h-1.4zM785.5,958.3h2.0v2.0h-2.0zM814.5,963.6h1.4v1.4h-1.4zM844.2,1022.8h1.4v1.4h-1.4zM860.0,989.4h2.0v2.0h-2.0zM826.9,981.8h2.0v2.0h-2.0zM785.1,969.1h2.0v2.0h-2.0zM753.5,992.5h2.5v2.5h-2.5zM830.1,949.9h2.0v2.0h-2.0zM847.9,949.7h2.0v2.0h-2.0zM843.0,1011.3h2.0v2.0h-2.0zM795.1,965.7h1.4v1.4h-1.4zM816.0,1009.6h1.4v1.4h-1.4zM853.5,985.4h2.5v2.5h-2.5zM806.6,962.9h2.0v2.0h-2.0zM768.3,1034.6h2.5v2.5h-2.5zM826.8,936.2h1.4v1.4h-1.4zM848.1,954.3h1.4v1.4h-1.4zM806.3,951.0h1.4v1.4h-1.4zM766.7,969.4h1.4v1.4h-1.4zM774.2,980.9h2.0v2.0h-2.0zM821.8,946.1h2.5v2.5h-2.5z" fill="#44589a"/>
<path d="M781.0,980.4h1.4v1.4h-1.4zM798.2,986.4h1.4v1.4h-1.4zM814.7,987.3h1.4v1.4h-1.4zM787.5,983.8h2.0v2.0h-2.0zM765.3,959.1h1.4v1.4h-1.4zM798.2,998.8h2.0v2.0h-2.0zM823.9,985.6h1.4v1.4h-1.4zM828.8,1013.4h1.4v1.4h-1.4zM790.6,967.8h2.8v2.8h-2.8zM844.5,1026.1h1.4v1.4h-1.4zM807.0,1002.4h1.4v1.4h-1.4zM811.2,992.9h1.4v1.4h-1.4zM822.2,994.8h2.8v2.8h-2.8zM812.6,991.5h2.0v2.0h-2.0zM851.4,1006.1h2.8v2.8h-2.8zM798.4,989.3h2.0v2.0h-2.0zM833.7,981.7h2.0v2.0h-2.0zM795.5,1007.6h2.0v2.0h-2.0zM809.7,994.8h2.0v2.0h-2.0zM805.8,995.5h2.0v2.0h-2.0zM804.7,995.6h2.8v2.8h-2.8zM812.2,994.2h2.8v2.8h-2.8zM803.5,990.7h2.8v2.8h-2.8zM808.2,1018.2h2.0v2.0h-2.0zM797.1,988.3h1.4v1.4h-1.4zM811.0,984.7h2.8v2.8h-2.8zM800.5,982.5h1.4v1.4h-1.4zM830.4,1000.0h2.0v2.0h-2.0zM800.0,994.0h2.0v2.0h-2.0zM808.2,983.4h2.0v2.0h-2.0zM784.7,978.6h1.4v1.4h-1.4zM832.3,971.0h1.4v1.4h-1.4zM815.8,985.8h1.4v1.4h-1.4zM808.0,974.0h1.4v1.4h-1.4zM782.6,1004.8h2.0v2.0h-2.0zM834.7,1036.7h2.0v2.0h-2.0zM822.6,995.9h1.4v1.4h-1.4zM804.4,996.4h1.4v1.4h-1.4zM830.8,995.2h1.4v1.4h-1.4zM846.4,984.8h1.4v1.4h-1.4zM821.4,1018.2h2.0v2.0h-2.0zM822.9,982.3h2.0v2.0h-2.0zM795.6,1026.2h2.0v2.0h-2.0zM798.2,984.1h2.8v2.8h-2.8zM834.4,980.6h1.4v1.4h-1.4zM804.6,987.6h2.0v2.0h-2.0zM814.3,984.2h1.4v1.4h-1.4zM780.7,972.4h2.0v2.0h-2.0zM799.5,1010.5h2.8v2.8h-2.8zM788.1,969.7h1.4v1.4h-1.4zM799.8,1004.1h2.0v2.0h-2.0zM800.9,995.3h1.4v1.4h-1.4zM824.5,1011.3h1.4v1.4h-1.4zM804.3,996.2h2.0v2.0h-2.0zM818.4,990.8h2.0v2.0h-2.0zM817.4,985.5h2.0v2.0h-2.0zM806.4,994.8h2.0v2.0h-2.0zM842.9,970.3h1.4v1.4h-1.4zM802.6,978.2h1.4v1.4h-1.4zM780.4,1007.8h2.0v2.0h-2.0zM823.3,1002.0h2.0v2.0h-2.0zM807.5,979.5h2.8v2.8h-2.8zM813.8,983.4h2.0v2.0h-2.0zM800.1,965.2h1.4v1.4h-1.4zM804.2,973.7h2.0v2.0h-2.0zM772.2,976.4h1.4v1.4h-1.4zM832.8,992.2h2.0v2.0h-2.0zM834.1,969.3h1.4v1.4h-1.4zM815.2,988.3h1.4v1.4h-1.4zM797.2,961.7h2.0v2.0h-2.0zM798.1,992.4h1.4v1.4h-1.4zM811.4,998.3h1.4v1.4h-1.4zM806.9,987.2h1.4v1.4h-1.4zM800.2,1005.7h2.0v2.0h-2.0zM806.8,996.2h2.8v2.8h-2.8zM811.7,991.8h2.8v2.8h-2.8zM805.0,1002.2h1.4v1.4h-1.4zM806.4,986.5h2.0v2.0h-2.0zM783.8,1002.0h2.0v2.0h-2.0zM802.2,996.0h2.8v2.8h-2.8zM793.8,986.8h2.0v2.0h-2.0zM775.7,982.6h2.8v2.8h-2.8zM773.5,998.6h1.4v1.4h-1.4zM769.8,984.8h1.4v1.4h-1.4zM791.9,983.2h2.8v2.8h-2.8zM843.9,989.4h2.0v2.0h-2.0zM813.4,998.5h2.0v2.0h-2.0zM806.7,984.5h1.4v1.4h-1.4zM808.6,1010.7h1.4v1.4h-1.4zM825.7,986.1h2.0v2.0h-2.0zM804.2,983.2h2.0v2.0h-2.0zM823.3,974.3h2.0v2.0h-2.0zM789.6,1006.5h2.8v2.8h-2.8zM814.0,1006.4h1.4v1.4h-1.4zM805.7,957.0h1.4v1.4h-1.4zM811.4,993.9h1.4v1.4h-1.4zM806.0,995.5h1.4v1.4h-1.4zM823.3,981.4h2.8v2.8h-2.8zM809.2,981.5h2.0v2.0h-2.0zM807.0,961.7h2.0v2.0h-2.0zM824.4,994.8h2.0v2.0h-2.0zM821.9,1015.9h1.4v1.4h-1.4zM803.9,1005.3h1.4v1.4h-1.4zM791.3,1007.2h1.4v1.4h-1.4zM797.3,993.5h2.0v2.0h-2.0zM812.4,1004.8h2.0v2.0h-2.0zM858.8,962.3h2.0v2.0h-2.0zM774.4,978.9h2.0v2.0h-2.0zM806.6,993.2h1.4v1.4h-1.4zM777.5,982.8h2.8v2.8h-2.8zM791.5,957.6h1.4v1.4h-1.4zM790.1,984.6h1.4v1.4h-1.4zM779.2,1009.3h1.4v1.4h-1.4zM779.8,993.6h2.0v2.0h-2.0zM797.5,1002.7h1.4v1.4h-1.4zM820.7,951.4h1.4v1.4h-1.4zM773.6,999.7h2.8v2.8h-2.8zM790.5,1013.3h2.0v2.0h-2.0zM815.6,989.6h2.8v2.8h-2.8zM800.0,986.7h1.4v1.4h-1.4zM800.8,1006.1h2.0v2.0h-2.0zM797.7,997.6h1.4v1.4h-1.4zM815.5,993.8h1.4v1.4h-1.4zM807.1,1004.9h1.4v1.4h-1.4zM795.3,974.9h2.0v2.0h-2.0zM804.6,991.6h2.8v2.8h-2.8zM803.3,974.7h2.0v2.0h-2.0zM833.9,970.9h1.4v1.4h-1.4zM748.5,981.9h1.4v1.4h-1.4z" fill="#3f4c7b"/>
<path d="M810.1,984.0h1.4v1.4h-1.4zM805.2,1001.9h2.0v2.0h-2.0zM802.8,978.4h2.8v2.8h-2.8zM800.5,994.6h2.0v2.0h-2.0zM795.7,990.9h1.4v1.4h-1.4zM811.1,983.1h2.0v2.0h-2.0zM813.4,992.9h2.0v2.0h-2.0zM801.7,990.2h2.8v2.8h-2.8zM803.3,988.3h2.8v2.8h-2.8zM812.1,991.8h1.4v1.4h-1.4zM811.5,983.5h1.4v1.4h-1.4zM805.1,993.9h1.4v1.4h-1.4zM812.0,986.4h2.8v2.8h-2.8zM800.0,988.4h2.0v2.0h-2.0zM815.1,984.9h2.0v2.0h-2.0zM816.6,992.7h2.0v2.0h-2.0zM819.3,980.1h2.8v2.8h-2.8zM802.8,999.0h2.0v2.0h-2.0zM797.5,982.3h1.4v1.4h-1.4zM810.6,990.7h1.4v1.4h-1.4zM812.4,990.5h1.4v1.4h-1.4zM817.0,999.8h2.8v2.8h-2.8zM809.4,986.1h2.0v2.0h-2.0zM819.2,997.1h2.0v2.0h-2.0zM804.9,990.3h1.4v1.4h-1.4zM803.6,992.8h2.8v2.8h-2.8zM796.0,987.8h2.0v2.0h-2.0zM815.1,994.7h2.8v2.8h-2.8zM812.0,987.9h1.4v1.4h-1.4zM818.0,993.6h2.8v2.8h-2.8zM820.4,982.6h2.0v2.0h-2.0zM802.0,987.8h1.4v1.4h-1.4zM810.9,988.0h2.0v2.0h-2.0zM817.1,997.5h2.0v2.0h-2.0zM803.3,996.8h2.0v2.0h-2.0zM804.3,989.7h2.0v2.0h-2.0zM813.6,988.2h2.0v2.0h-2.0zM800.4,992.9h1.4v1.4h-1.4zM816.9,989.4h1.4v1.4h-1.4zM811.8,985.3h2.0v2.0h-2.0zM810.9,998.5h2.8v2.8h-2.8zM809.8,981.3h2.8v2.8h-2.8zM822.1,989.0h2.0v2.0h-2.0zM810.0,993.9h1.4v1.4h-1.4zM807.5,993.6h1.4v1.4h-1.4zM814.1,980.6h1.4v1.4h-1.4zM798.1,979.0h2.0v2.0h-2.0zM800.9,987.5h2.0v2.0h-2.0zM807.3,993.5h2.0v2.0h-2.0zM807.7,995.5h1.4v1.4h-1.4zM799.8,977.2h2.0v2.0h-2.0zM888.2,1027.8h3.2v2.0h-3.2zM924.3,1010.9h3.2v2.0h-3.2zM867.8,1018.5h3.2v2.0h-3.2zM884.1,1008.3h4.8v3.0h-4.8zM890.2,1018.5h3.2v2.0h-3.2zM894.6,1019.7h3.2v2.0h-3.2zM828.6,993.2h3.2v2.0h-3.2zM911.7,1006.3h4.8v3.0h-4.8zM937.5,1034.5h4.8v3.0h-4.8zM927.3,1045.7h4.8v3.0h-4.8zM827.9,993.7h2.2v1.4h-2.2zM900.6,1020.5h2.2v1.4h-2.2zM867.1,1009.3h3.2v2.0h-3.2zM933.8,1011.4h2.2v1.4h-2.2zM916.8,1041.0h2.2v1.4h-2.2zM915.1,1017.1h2.2v1.4h-2.2zM833.3,994.9h3.2v2.0h-3.2zM853.1,1006.3h2.2v1.4h-2.2zM925.0,1008.3h2.2v1.4h-2.2zM916.1,1006.1h3.2v2.0h-3.2zM878.5,1013.7h2.2v1.4h-2.2zM830.8,1001.1h3.2v2.0h-3.2z" fill="#367cb0"/>
<ellipse cx="802.6" cy="988.4" rx="5.2" ry="4.2" fill="#1a1a1a"/>
<rect x="778" y="995" width="2.2" height="2.2" fill="#52f234"/>
<polygon points="914.0,980.0 925.0,978.0 936.0,980.0 942.0,986.0 950.0,990.0 946.0,994.0 936.0,997.0 930.0,1003.0 922.0,1000.0 918.0,992.0" fill="#3f6aa8"/>
<polygon points="926.0,992.0 950.0,992.0 952.0,998.0 938.0,1002.0 930.0,1004.0" fill="#3a74ae"/>
<line x1="842.0" y1="992.0" x2="938.0" y2="1014.5" stroke="#3b74ac" stroke-width="1.8" stroke-dasharray="3 2 1.5 3 4 2"/>
<line x1="846.0" y1="1008.0" x2="957.0" y2="1058.0" stroke="#3578b4" stroke-width="1.8" stroke-dasharray="2 3 4 2 1.5 2.5"/>
<line x1="842.0" y1="989.0" x2="925.0" y2="999.0" stroke="#3b70a3" stroke-width="1.6" stroke-dasharray="2 4 3 3"/>
<line x1="870.0" y1="996.0" x2="936.0" y2="1004.0" stroke="#3578b4" stroke-width="1.6" stroke-dasharray="3 3 1.5 4"/>
<polygon points="938.0,1014.8 1000.0,1027.0 1040.0,1034.2 1058.0,1039.0 1065.5,1043.0 1065.5,1046.0 1040.0,1041.2 1000.0,1033.0 960.0,1023.0 938.0,1017.0" fill="#2f86bc"/>
<polygon points="990.0,1026.0 1040.0,1034.6 1058.0,1039.4 1065.5,1043.0 1065.5,1046.0 1040.0,1041.0 1000.0,1032.6 990.0,1030.0" fill="#2b98ca"/>
<polygon points="1044.0,1034.0 1058.0,1036.0 1060.0,1040.0 1046.0,1037.5" fill="#3580b8"/>
<polygon points="975.8,1001.0 1000.0,1001.0 1032.0,1003.0 1032.0,1007.5 1000.0,1006.0 975.8,1005.0" fill="#2b98ca"/>
<polygon points="996.0,1005.0 1032.0,1007.5 1032.0,1012.5 1012.0,1010.5" fill="#3a74ae"/>
<polygon points="940.0,1002.0 960.0,1002.5 962.0,1008.0 940.0,1007.0" fill="#3a74ae"/>
<polygon points="1055.0,1009.0 1066.0,1011.0 1080.0,1015.5 1080.0,1018.0 1055.0,1013.0" fill="#3a74ae"/>
<rect x="979.0" y="993.0" width="5.0" height="4.0" fill="#3580b8"/>
<rect x="1033.0" y="994.0" width="6.0" height="5.0" fill="#2f86bc"/>
<rect x="1052.0" y="995.0" width="10.0" height="6.0" fill="#2f86bc"/>
<rect x="1034.0" y="1003.0" width="6.0" height="4.0" fill="#3580b8"/>
<rect x="1048.0" y="1003.0" width="5.0" height="5.0" fill="#3580b8"/>
<rect x="1056.0" y="1004.0" width="5.0" height="5.0" fill="#2f86bc"/>
<rect x="1018.0" y="1009.0" width="8.0" height="4.0" fill="#3a74ae"/>
<rect x="1038.0" y="1012.0" width="6.0" height="4.0" fill="#3a74ae"/>
<rect x="1048.0" y="1012.0" width="4.0" height="4.0" fill="#3a74ae"/>
<rect x="1074.0" y="1015.0" width="5.0" height="5.0" fill="#3580b8"/>
<rect x="959.0" y="1012.0" width="5.0" height="4.0" fill="#3580b8"/>
<rect x="942.0" y="1041.0" width="8.0" height="3.0" fill="#3580b8"/>
<rect x="952.0" y="1045.0" width="5.0" height="6.0" fill="#3580b8"/>
<rect x="940.0" y="1052.0" width="14.0" height="4.0" fill="#3a74ae"/>
<rect x="962.0" y="1051.0" width="4.0" height="3.0" fill="#2f86bc"/>
<rect x="1012.0" y="1071.0" width="6.0" height="4.0" fill="#2b98ca"/>
<rect x="1020.0" y="1074.0" width="10.0" height="6.0" fill="#2f86bc"/>
<rect x="1042.0" y="1080.0" width="6.0" height="6.0" fill="#2b98ca"/>
<rect x="1047.0" y="1086.0" width="3.0" height="2.0" fill="#2b98ca"/>
<rect x="899.0" y="1069.0" width="3.0" height="3.0" fill="#3b70a3"/>
<rect x="914.0" y="1081.0" width="5.0" height="5.0" fill="#3b70a3"/>
<rect x="930.0" y="1096.0" width="4.0" height="1.5" fill="#3b70a3"/>
<rect x="568.0" y="1095.0" width="5.0" height="5.0" fill="#3b70a3"/>
<rect x="584.0" y="1111.0" width="5.0" height="5.0" fill="#3b70a3"/>
<rect x="900.0" y="1069.0" width="3.0" height="3.0" fill="#3b70a3"/>
<rect x="1013.0" y="1218.0" width="4.0" height="4.0" fill="#3b70a3"/>
<rect x="1010.0" y="1183.0" width="3.0" height="3.0" fill="#3b70a3"/>
<clipPath id="cstk"><polygon points="1060.0,1008.8 1091.2,1011.2 1192.0,1018.4 1252.0,1029.2 1324.0,1037.6 1396.0,1046.0 1468.0,1052.0 1490.0,1054.0 1496.5,1056.5 1498.5,1060.0 1497.0,1064.0 1489.6,1066.4 1444.0,1062.8 1372.0,1053.2 1312.0,1046.0 1264.0,1041.9 1204.0,1034.0 1168.0,1036.5 1140.0,1032.0 1115.0,1022.0 1088.0,1016.0 1060.0,1012.6"/></clipPath>
<g clip-path="url(#cstk)">
<rect x="1055" y="1000" width="56" height="80" fill="#3a74ae"/>
<rect x="1110" y="1000" width="31" height="80" fill="#3580b8"/>
<rect x="1140" y="1000" width="61" height="80" fill="#2f86bc"/>
<rect x="1200" y="1000" width="66" height="80" fill="#2d8cc2"/>
<rect x="1265" y="1000" width="176" height="80" fill="#2a96c8"/>
<rect x="1440" y="1000" width="17" height="80" fill="#27a3d2"/>
<rect x="1456" y="1000" width="45" height="80" fill="#2a9acc"/>
</g>
<polygon points="1312.0,1030.0 1320.0,1029.0 1320.0,1040.0 1312.0,1040.0" fill="#2f86bc"/>
<ellipse cx="803.1" cy="988.6" rx="743.8" ry="743.8" fill="none" stroke="#fff" stroke-width="2.8"/>
<g fill="none" stroke="#868686" stroke-width="3.0" stroke-linejoin="round" stroke-linecap="round">
<path d="M291.3,220.5 L295.5,226.8 L289.3,236.2 M388.8,220.5 L415.0,226.2 M415.0,292.8 L411.8,293.8 L401.4,300.1 L388.8,301.1 L376.2,306.4 L369.9,310.6 L371.0,319.0 L365.7,326.3 L355.3,329.4 L356.3,339.9 L358.4,352.5 L363.6,358.8 L362.6,371.3 L362.6,392.3 L357.3,402.8 L357.3,415.3 L361.5,425.8 L360.5,432.1 L353.2,437.3 L350.0,448.9 L346.9,455.2 L350.0,469.8 L350.0,473.6 L279.8,445.7 L219.1,483.4 M198.1,453.1 L180.3,459.3 L183.4,476.1 L192.9,478.2 L202.3,495.0 L210.7,504.4 L206.5,509.6 L205.4,517.0 L185.5,519.1 L180.3,513.8 L168.8,523.3 L165.6,536.9 L160.4,547.3 L159.3,555.7 L157.2,566.2 L153.1,589.3 L146.8,592.4 L148.0,605.0 M415.0,492.6 L415.0,491.8 L402.4,518.0 M415.0,226.2 L433.0,229.9 L451.9,235.1 L472.9,235.1 L479.1,220.5 M451.9,235.1 L461.3,241.4 L462.4,251.9 L456.1,277.1 L455.0,288.6 L437.2,290.7 L422.6,289.6 L415.0,292.8 M514.8,220.5 L515.8,229.9 L521.1,237.2 L527.3,238.3 L535.7,242.5 L542.0,241.4 L548.3,222.6 L556.7,221.5 L565.1,225.7 L570.3,220.5 M527.3,238.3 L525.2,249.8 L529.4,266.6 L532.6,279.1 L532.6,291.7 L539.9,300.1 L542.0,310.6 L539.9,324.2 L533.6,331.5 L536.8,344.1 L535.7,355.6 L524.2,351.4 L514.8,360.9 L510.6,371.3 L512.7,388.1 L504.3,399.6 L527.3,400.7 L528.4,411.2 L525.2,425.8 L527.3,434.2 L524.2,446.8 L528.4,453.1 L519.0,465.6 L512.7,468.8 L508.5,482.4 M415.0,492.6 L416.3,491.8 L422.6,488.7 L426.8,484.5 L449.8,481.3 L462.4,483.4 L481.2,483.4 L493.8,484.5 L508.5,482.4 L577.6,483.4 M527.3,434.2 L542.0,430.0 L549.3,431.1 L556.7,431.1 L554.6,423.7 L558.8,411.2 L560.9,394.4 L556.7,377.6 L565.1,360.9 L573.4,348.3 L581.8,348.3 L588.1,337.8 L594.4,335.7 L611.2,310.6 L619.5,295.9 L623.7,281.2 L625.8,270.8 L632.1,262.4 L640.5,239.3 L651.0,229.9 L667.7,235.1 L665.6,256.1 L666.7,275.0 L671.9,279.1 L682.4,277.1 L703.3,272.9 L714.9,271.8 L718.0,264.5 L724.3,261.3 L720.1,236.2 L707.5,231.0 L695.0,227.8 L680.3,235.1 L686.6,220.5 M695.0,227.8 L703.3,220.5 M549.3,431.1 L552.5,442.6 L548.3,454.1 L539.9,459.3 L556.7,461.4 L577.6,463.5 L583.9,465.6 L577.6,484.5 L565.1,503.3 L561.9,511.7 M714.9,271.8 L717.0,281.2 L722.2,285.4 L723.3,300.1 L727.4,316.9 L723.3,331.5 L728.5,342.0 L723.3,344.1 L720.1,356.7 L711.7,370.3 L701.3,374.5 L697.1,383.9 L692.9,398.6 L683.4,399.6 L687.6,409.1 L682.4,419.5 L683.4,426.9 L664.6,432.1 L661.4,442.6 L655.2,454.1 L640.5,459.3 L635.2,464.6 L632.1,476.1 L625.8,480.3 L607.0,482.4 L604.9,490.8 L599.6,503.3 M728.5,342.0 L736.9,352.5 L747.3,358.8 L755.7,356.7 L764.1,361.9 L778.8,356.7 L793.4,352.5 L805.0,351.1 M683.4,426.9 L688.7,435.2 L695.0,437.3 L698.1,451.0 L697.1,463.5 L703.3,474.0 L711.7,482.4 L728.5,489.7 L742.1,493.9 L740.0,478.2 L762.0,483.4 L778.8,485.5 L801.8,486.6 L805.0,488.1 M801.8,539.0 L795.5,562.0 L790.3,574.6 M764.1,570.4 L759.9,587.2 L749.4,601.8 L747.4,605.0 M556.7,597.6 L552.8,605.0 M805.2,220.5 L808.4,231.0 L818.9,239.3 L827.2,250.9 L841.9,258.2 L865.0,262.4 L890.1,257.1 L900.6,244.6 L909.0,235.1 L914.2,220.5 M805.0,351.1 L808.4,350.4 L821.0,355.6 L837.7,352.5 L853.4,346.2 L856.6,349.3 L871.2,344.1 L882.8,339.5 L890.1,341.0 L934.1,350.0 L940.4,335.7 L944.6,307.4 L965.5,312.7 L986.5,308.1 L1019.0,318.5 L1023.2,372.4 M1065.1,220.5 L1061.9,229.9 L1067.2,237.2 L1069.3,247.7 L1066.1,258.2 L1072.4,270.8 L1078.7,283.3 L1077.6,292.8 L1086.0,304.3 L1097.5,314.8 L1101.7,324.2 L1101.7,335.7 L1097.5,356.7 L1098.6,361.9 M1112.2,370.9 L1116.4,379.7 L1120.6,394.4 L1124.8,400.7 L1133.2,404.9 L1131.1,414.3 L1137.3,422.7 L1147.8,432.1 L1151.0,440.5 L1148.9,451.0 L1156.2,447.8 L1164.6,460.4 L1167.7,471.9 L1170.9,482.4 L1178.2,488.7 L1175.1,507.5 L1170.9,520.1 L1166.7,530.6 L1156.2,543.2 L1155.2,553.6 L1156.2,559.9 L1153.1,570.4 L1156.2,585.1 L1162.5,595.5 L1166.3,605.0 M1156.2,549.4 L1195.0,550.8 M805.0,488.1 L808.4,488.7 L806.3,503.3 L813.6,513.8 L809.4,528.5 L805.0,537.3 M1195.0,550.8 L1410.0,557.8 L1575.5,562.4 M148.0,605.0 L147.8,614.7 L139.4,615.7 L144.7,623.0 L143.6,637.7 L145.7,648.2 L141.5,662.9 L138.4,673.3 L133.1,689.1 L124.8,687.0 L118.5,694.3 L112.2,692.2 L108.0,702.7 L103.8,707.9 L95.4,709.0 L89.1,715.2 L72.4,718.4 L70.3,724.7 L57.7,726.8 L54.6,732.0 L38.9,736.2 L30.1,742.5 M72.4,720.5 L91.2,734.1 L103.8,750.9 L115.3,763.4 L114.3,769.7 L110.1,773.9 L109.1,780.2 L99.6,784.4 L98.6,792.8 L94.4,798.0 L90.2,797.0 L85.0,804.3 L85.0,813.7 L78.7,822.1 L76.6,830.5 L75.5,841.0 L72.4,851.4 L75.5,859.8 L76.6,870.3 L81.8,878.7 L79.7,889.2 L81.8,899.6 L76.6,903.8 L79.7,912.2 L74.5,918.5 L73.4,926.9 L77.6,937.3 L85.0,941.5 L74.5,946.8 L69.2,952.0 L76.6,960.4 L72.4,963.5 L72.4,975.1 L82.9,979.3 L92.3,983.4 L85.0,991.8 L83.1,995.0 M327.0,609.4 L325.9,621.0 L323.8,627.2 L324.9,633.5 L321.7,641.9 L317.5,647.1 L324.9,654.5 L319.6,666.0 L313.3,661.8 L309.2,657.6 L298.7,659.7 L296.6,667.1 L289.3,670.2 L289.3,683.8 L286.1,692.2 L285.1,706.9 L287.2,711.1 L279.8,711.1 L277.7,716.3 L280.9,720.5 L276.7,726.8 L267.2,723.6 L263.1,727.8 L261.0,734.1 L264.1,742.5 L268.3,744.6 L273.5,753.0 L283.0,762.4 L278.8,767.6 L280.9,776.0 L291.3,785.4 L287.2,795.9 L291.3,803.2 L289.3,813.7 L285.1,824.2 L278.8,829.4 L280.9,836.8 L285.1,839.9 L286.1,850.4 L289.3,854.6 L330.1,864.0 L372.0,901.7 L377.3,892.3 L409.7,926.9 L415.0,922.8 M289.3,854.6 L292.4,874.5 L298.7,882.9 L303.9,907.0 L298.7,903.8 L290.3,909.1 L278.8,914.3 L275.6,920.6 L280.9,926.9 L276.7,935.3 L280.9,943.6 L276.7,949.9 L279.8,956.2 L285.1,959.4 L278.8,968.8 L274.6,979.3 L271.4,987.6 L260.1,995.0 M552.8,605.0 L550.4,610.5 L554.6,623.0 L558.8,639.8 L556.7,651.3 L544.1,649.2 L552.5,658.7 L550.4,679.6 L539.9,683.8 L535.7,694.3 L544.1,704.8 L554.6,711.1 L560.9,721.5 L556.7,727.8 L560.9,744.6 L566.1,755.1 L577.6,753.0 L582.9,759.2 L581.8,773.9 L575.5,782.3 L570.3,786.5 L572.4,794.9 L576.6,791.7 L569.2,801.2 L556.7,807.4 L550.4,815.8 L546.2,828.4 L534.7,833.6 L536.8,850.4 L532.6,852.5 L529.4,841.0 L524.2,836.8 L521.1,830.5 L512.7,820.0 L510.6,811.6 L504.3,809.5 M556.7,651.3 L573.4,654.5 L581.8,663.9 L590.2,661.8 L602.8,657.6 L619.5,661.8 L621.6,654.5 L630.0,652.4 L623.7,660.8 L621.6,667.1 L627.9,673.3 L629.0,680.7 L634.2,676.5 L642.6,680.7 L663.5,688.0 L680.3,681.7 L695.0,682.8 L703.3,679.6 L702.3,671.2 L705.4,662.9 L706.5,654.5 L717.0,656.6 L714.9,667.1 L719.1,672.3 L723.3,680.7 L715.9,692.2 L720.1,704.8 L724.3,717.3 L726.4,727.8 L724.3,736.2 L725.3,746.7 L722.2,759.2 L715.9,771.8 L709.6,784.4 L708.6,794.9 L703.3,807.4 L692.9,824.2 M747.4,605.0 L743.2,612.6 L741.1,627.2 L739.0,644.0 L728.5,650.3 L722.2,660.8 L719.1,672.3 M556.7,727.8 L567.2,728.9 L572.4,734.1 L577.6,732.0 L586.0,724.7 L594.4,728.9 L604.9,736.2 L615.3,732.0 L625.8,736.2 L635.2,743.5 L638.4,750.9 L642.6,755.1 L659.3,756.1 L690.8,761.3 L695.0,744.6 L724.3,746.7 M638.4,750.9 L642.6,716.3 L652.0,744.6 L664.6,736.2 L664.6,725.7 L693.9,732.0 L691.8,740.4 L695.0,744.6 M690.8,761.3 L689.7,767.6 L703.3,770.8 L707.5,784.4 M582.9,761.3 L598.6,765.5 L619.5,770.8 L630.0,778.1 L636.3,784.4 L638.4,790.7 L648.9,799.1 L657.2,807.4 L664.6,820.0 L671.9,826.3 L680.3,820.0 L686.6,813.7 L678.2,811.6 L683.4,790.7 L696.0,804.3 L696.0,811.6 L691.8,824.2 M576.6,791.7 L590.2,793.8 L605.9,806.4 L611.2,815.8 L621.6,824.2 L627.9,834.7 L625.8,845.2 L630.0,852.5 L640.5,859.8 L648.9,859.8 L654.1,848.3 L667.7,854.6 L671.9,838.9 L676.1,828.4 L671.9,826.3 M640.5,859.8 L648.9,868.2 L661.4,874.5 L665.6,880.8 L673.0,891.3 L682.4,895.4 L682.4,903.8 L690.8,914.3 L703.3,922.7 L711.7,935.3 L728.5,952.0 L736.9,960.4 L743.2,973.0 L753.6,975.1 L759.9,981.4 L772.5,983.4 M658.3,878.7 L651.0,876.6 L646.8,887.1 L637.3,891.3 L632.1,901.7 L630.0,914.3 L634.2,926.9 L632.1,939.4 L627.9,954.1 L632.1,956.2 L627.9,964.6 L619.5,965.6 L607.0,964.6 L604.9,981.4 L611.2,983.4 L609.7,995.0 M479.1,838.9 L489.6,849.3 L508.5,857.7 L523.1,866.1 L529.4,874.5 L530.5,883.9 L539.9,886.0 L556.7,885.0 L563.0,893.3 L577.6,901.7 L594.4,910.1 L611.2,916.4 L627.9,920.6 L634.2,926.9 M482.3,955.2 L489.6,954.1 L493.8,945.7 L508.5,941.5 L527.3,939.4 L552.5,939.0 L560.9,943.6 L575.5,954.1 L588.1,958.3 L607.0,960.4 M479.1,964.6 L489.6,968.8 L490.7,981.4 L495.9,991.8 L498.4,995.0 M692.9,824.2 L700.2,816.9 L736.9,825.2 L739.0,822.1 L758.9,827.3 L759.9,822.1 L805.0,832.6 M724.3,736.2 L732.7,729.9 L743.2,733.1 L745.3,740.4 L791.4,749.8 L794.5,736.2 L805.0,738.2 M415.0,922.8 L418.4,918.5 L424.7,908.0 M928.2,663.9 L953.0,663.9 L954.0,668.1 L994.9,669.1 L994.9,681.7 L1000.1,682.8 L1000.1,692.2 L1033.6,698.5 L1031.5,714.2 L1085.0,722.6 L1119.5,722.6 L1121.6,696.4 L1142.6,695.3 L1154.1,639.8 L1175.1,639.4 M1166.3,605.0 L1168.8,610.5 L1173.0,623.0 L1175.1,639.4 L1183.4,646.1 L1189.7,658.7 L1187.6,673.3 L1185.5,683.8 L1181.4,696.4 L1187.6,709.0 L1185.5,725.7 L1187.6,734.1 L1182.4,746.7 L1180.3,763.4 L1176.1,773.9 L1178.2,784.4 L1185.5,791.7 M1195.0,793.3 L1135.3,792.4 L1134.2,797.0 L1117.4,796.5 L1118.5,785.4 L1083.9,785.4 L1083.3,828.0 L1074.5,828.4 L1074.5,838.9 L1054.6,838.9 L1054.2,866.5 L1045.6,866.5 L1045.2,854.6 L1026.3,854.6 L1025.2,885.4 L986.5,880.8 L986.5,878.3 L980.6,877.6 L979.8,884.5 L943.5,877.0 L940.4,893.3 L942.5,894.4 L945.6,907.6 L936.2,907.0 L937.2,919.5 L933.1,920.6 L929.9,938.4 L909.0,922.7 L904.8,931.1 L871.2,896.5 L851.3,897.1 L846.1,879.7 L835.6,869.3 M1083.3,828.0 L1099.6,828.4 L1098.6,867.2 L1087.1,867.8 L1087.5,883.9 L1102.8,883.9 L1102.8,899.6 L1097.5,901.7 L1086.0,902.8 L1079.7,931.1 L1082.9,932.1 L1078.7,951.0 L1091.3,954.1 L1090.2,964.6 L1087.1,975.1 L1080.8,993.9 L1086.1,995.0 M904.8,931.1 L894.3,956.2 L895.3,968.8 L898.5,977.2 L906.9,985.5 L919.4,985.5 L927.8,995.0 M805.0,738.2 L811.5,739.3 L806.3,760.3 L819.9,763.0 L821.0,754.0 L832.5,756.7 L833.5,762.4 L840.9,764.5 L841.9,767.6 L855.5,771.8 L855.5,778.1 M805.0,832.6 L831.4,838.9 L838.8,843.1 M1195.0,793.3 L1219.3,793.8 L1212.0,780.6 L1271.7,781.2 L1272.1,738.7 L1316.3,739.3 L1316.3,749.8 L1410.0,750.9 L1409.6,760.3 L1459.3,761.8 L1460.3,765.5 L1540.3,766.6 L1541.0,750.9 L1575.5,752.3 M1316.3,749.8 L1316.3,765.5 L1323.1,766.6 L1323.1,778.5 L1315.7,778.5 L1313.6,822.1 L1316.3,823.2 L1315.7,830.5 L1312.6,831.5 L1311.9,856.7 L1307.3,857.7 L1307.3,871.8 L1318.2,871.8 L1307.3,922.7 L1307.3,927.9 L1321.6,931.1 L1323.1,970.9 L1315.7,973.0 L1307.3,971.9 L1304.2,989.7 L1313.6,991.8 L1312.8,995.0 M83.1,995.0 L74.5,1006.8 L68.2,1021.4 L67.1,1034.0 L60.9,1048.7 L55.6,1058.1 L63.0,1058.1 L69.2,1065.4 L72.4,1073.8 L76.6,1075.9 L73.4,1084.3 L70.3,1092.7 L60.9,1094.8 L55.6,1107.3 L57.7,1124.1 L58.8,1139.8 L67.1,1136.7 L63.0,1146.1 L63.0,1163.9 L59.8,1174.4 L68.2,1184.9 L75.5,1179.6 L87.1,1183.8 L97.5,1175.4 L246.3,1174.4 L245.9,1090.6 L234.8,1082.2 L240.0,1073.8 L244.2,1065.4 L252.6,1060.2 L250.5,1047.6 L243.2,1040.3 L245.2,1031.9 L252.6,1024.6 L255.7,1017.2 L244.2,1009.9 L252.6,1000.5 L260.1,995.0 M246.3,1116.8 L389.8,1115.7 L391.9,1100.0 L405.5,1099.0 L409.7,1102.1 L415.0,1099.8 M213.8,1174.8 L162.5,1249.8 M184.5,1258.2 L164.6,1281.3 L162.1,1289.6 L164.6,1300.1 L170.9,1314.8 L174.6,1329.4 L174.0,1344.1 L166.7,1360.9 L166.7,1377.6 L162.5,1383.9 L161.1,1385.0 M166.7,1371.4 L221.2,1377.6 L222.4,1385.0 M33.6,1295.9 L33.6,1304.3 L38.9,1311.6 L61.9,1326.3 L82.9,1338.9 L92.3,1352.5 L94.4,1367.2 L92.2,1385.0 M415.0,1366.0 L411.8,1373.4 L403.4,1372.4 L397.2,1377.6 L390.9,1379.7 L390.4,1385.0 M495.9,996.3 L498.4,995.0 M513.3,995.0 L546.2,1000.5 L569.2,998.4 L575.5,995.2 L598.6,995.2 L608.0,1001.5 L609.7,995.0 M608.0,1001.5 L619.5,1002.6 L651.0,999.4 L667.7,996.3 L671.9,999.4 L682.4,1001.5 L692.9,1007.8 L703.3,1008.9 L720.1,1009.9 L728.5,1017.2 L739.0,1012.0 L751.5,1016.2 L766.2,1013.0 M617.4,1002.6 L611.2,1027.7 L602.8,1026.7 L592.3,1028.8 L583.9,1033.0 L565.1,1034.0 L558.8,1027.7 L550.4,1027.7 L545.1,1035.0 L547.2,1050.8 L544.1,1061.2 L539.9,1071.7 L544.1,1080.1 M611.2,1027.7 L618.5,1028.8 L618.5,1042.4 L621.6,1046.6 L620.6,1057.1 L624.8,1063.3 L627.9,1073.8 L632.1,1075.9 L631.1,1086.4 L647.8,1090.6 L642.6,1117.8 M529.4,1099.0 L529.4,1111.5 L534.7,1126.2 L538.9,1140.9 L542.0,1157.6 L541.0,1168.1 L534.7,1170.2 L534.7,1177.5 L542.0,1187.0 L546.2,1199.5 L548.3,1216.3 L552.5,1233.1 L554.6,1245.6 L563.0,1266.6 L573.4,1275.0 L572.4,1287.5 L574.5,1298.0 L574.5,1303.3 L602.8,1303.3 M600.7,1166.0 L603.8,1174.4 L599.6,1184.9 L604.9,1199.5 L599.6,1203.7 L596.5,1210.0 L598.6,1224.7 L601.7,1238.3 L600.7,1256.1 L604.9,1264.5 L607.0,1277.1 L602.8,1303.3 L599.6,1312.7 L592.3,1325.3 L591.2,1337.8 L587.1,1348.3 L588.1,1358.8 L583.9,1363.0 L579.7,1373.4 L575.2,1385.0 M601.7,1238.3 L620.6,1238.3 L623.7,1233.1 L631.1,1228.9 L633.2,1222.6 L638.4,1220.5 L646.8,1223.6 L655.2,1216.3 L653.1,1228.9 L664.6,1233.1 L670.9,1226.8 L674.0,1234.1 L680.3,1228.9 L690.8,1243.5 L700.2,1257.2 L707.5,1256.1 L714.9,1255.1 L715.9,1262.4 L720.1,1264.5 L721.2,1272.9 L730.6,1269.7 L742.1,1269.7 M554.6,1240.4 L546.2,1241.4 L535.7,1243.5 L528.4,1246.7 L524.2,1256.1 L516.9,1264.5 L508.5,1272.9 L505.3,1269.7 L487.5,1275.0 L477.1,1279.2 L458.2,1280.2 M528.4,1246.7 L530.5,1260.3 L535.7,1270.8 L542.0,1285.4 L545.1,1291.7 L552.5,1291.7 L554.6,1302.2 L560.9,1310.6 L569.2,1312.7 L571.3,1306.4 M554.6,1312.7 L544.1,1321.1 L538.9,1325.3 L539.9,1342.0 L535.7,1350.4 L534.7,1363.0 L530.5,1377.6 L533.3,1385.0 M486.5,1277.1 L487.5,1298.0 L491.7,1308.5 L497.0,1310.6 L502.2,1321.1 L535.7,1350.4 M482.3,1033.0 L478.1,1037.1 L477.1,1052.9 L475.0,1063.3 L477.1,1067.5 L475.0,1075.9 L460.3,1082.2 L456.1,1077.0 L445.6,1082.2 L443.5,1090.6 L435.1,1093.7 L422.6,1095.8 L415.0,1099.8 M443.5,1090.6 L444.6,1101.1 L449.8,1113.6 L455.0,1126.2 L449.8,1134.6 L447.7,1143.0 L441.4,1151.3 L446.7,1155.5 L444.6,1166.0 L449.8,1174.4 L455.0,1189.1 L459.2,1197.4 L462.4,1210.0 L460.3,1220.5 L464.5,1228.9 L462.4,1241.4 L460.3,1254.0 L455.0,1266.6 L458.2,1280.2 L454.0,1287.5 L456.1,1300.1 L459.2,1310.6 L447.7,1316.9 L446.7,1325.3 L433.0,1331.5 L429.9,1342.0 L418.4,1350.4 L416.3,1360.9 L415.0,1366.0 M776.7,1063.3 L797.6,1056.0 L805.0,1057.7 M743.2,1242.5 L790.3,1253.0 L793.4,1238.3 L805.0,1240.5 M588.1,1358.8 L592.3,1365.1 L604.9,1367.2 L621.6,1371.4 L636.3,1377.6 L640.5,1383.9 L645.9,1385.0 M645.9,1385.0 L657.2,1377.6 L665.6,1369.3 L671.9,1361.9 L688.7,1364.0 L711.7,1363.0 L720.1,1371.4 M690.8,1365.1 L688.7,1373.4 L680.3,1375.5 L681.3,1385.0 M805.0,1057.7 L806.3,1059.1 L816.8,1050.8 L831.4,1041.3 L829.3,1055.0 L844.0,1057.5 L848.2,1038.6 L863.9,1041.3 L888.0,1045.5 L889.1,1039.2 L914.2,1045.5 L919.4,1058.1 L944.6,1024.6 L934.1,1015.1 L937.2,1004.7 L927.8,995.0 M863.9,1041.3 L861.8,1082.2 L866.0,1083.2 L862.9,1099.0 L879.6,1103.1 L877.5,1121.0 L892.2,1123.1 L893.2,1118.9 L907.9,1122.0 L905.8,1135.6 L912.1,1137.7 L900.6,1190.1 L893.2,1190.1 L889.1,1215.2 M944.6,1024.6 L955.1,1025.6 L959.2,1034.0 L965.5,1036.1 L971.8,1046.6 L980.2,1051.8 L984.4,1061.2 L986.5,1069.6 L994.9,1072.8 L999.1,1080.1 L1007.4,1084.3 L1009.5,1092.7 L1016.9,1094.8 L1020.0,1103.1 L1027.3,1113.6 L1030.5,1124.1 L1033.6,1132.5 L1031.5,1137.7 L1041.0,1139.8 L1047.2,1146.1 L1046.2,1149.2 M1016.9,1094.8 L1043.1,1078.0 L1051.4,1075.9 L1068.2,1073.8 L1097.5,1069.6 L1126.9,1066.5 L1156.2,1070.7 L1177.2,1074.9 L1181.4,1099.0 L1195.0,1101.1 M1181.4,1099.0 L1183.4,1104.2 L1173.0,1154.5 L1160.4,1156.6 L1157.3,1163.9 L1183.4,1184.9 L1186.6,1191.2 L1182.4,1211.1 L1195.0,1212.7 M1195.0,1221.1 L1193.9,1228.9 L1195.0,1229.0 M1193.9,1228.9 L1189.7,1246.7 L1195.0,1247.7 L1188.7,1281.3 L1164.6,1281.3 L1164.6,1287.5 L1169.8,1290.7 L1141.5,1309.5 M1086.1,995.0 L1091.3,996.3 L1081.8,1009.9 L1105.9,1042.4 L1114.3,1039.2 L1116.4,1045.5 L1107.0,1048.7 L1104.9,1059.1 L1103.8,1072.8 M1116.4,1042.4 L1130.0,1050.8 L1131.1,1067.5 M1046.2,1149.2 L1010.6,1156.6 L1003.2,1191.2 L951.9,1180.3 L956.1,1200.6 L945.6,1199.5 L940.4,1225.7 L848.2,1206.9 L847.1,1211.1 L839.8,1212.1 L838.8,1214.2 L825.1,1211.1 L818.9,1243.5 L805.0,1240.5 M1043.1,1151.3 L1065.1,1146.1 L1065.1,1154.5 L1092.3,1160.8 L1089.2,1170.2 L1099.6,1172.7 L1101.7,1148.8 L1157.3,1162.9 M1043.1,1151.3 L1046.2,1159.7 L1059.8,1192.2 L1059.8,1226.8 L1054.6,1237.2 L1051.4,1245.6 L1041.0,1248.8 L1026.3,1254.0 L998.0,1276.0 L929.9,1287.5 L932.0,1271.8 L921.5,1268.7 L931.0,1225.7 M910.0,1266.6 L921.5,1268.7 M929.9,1287.5 L941.4,1290.7 L940.4,1298.0 L907.9,1291.3 L903.7,1300.1 L897.4,1302.2 L895.3,1319.0 L911.1,1323.2 L909.0,1335.7 L921.5,1338.9 L918.4,1354.6 L911.1,1355.6 L905.8,1377.6 L906.0,1385.0 M1051.4,1245.6 L1057.7,1262.4 L1064.0,1272.9 L1070.3,1268.7 L1078.7,1277.1 L1089.2,1283.3 L1095.4,1291.7 L1110.1,1292.8 L1120.6,1293.8 L1131.1,1298.0 L1135.3,1304.3 L1141.5,1309.5 L1145.7,1316.9 L1144.7,1325.3 L1156.2,1333.6 L1166.7,1346.2 L1173.0,1356.7 L1181.4,1365.1 L1191.8,1371.4 L1195.0,1373.0 M1120.6,1294.9 L1071.3,1326.3 L1064.0,1363.0 L1029.4,1357.1 L1027.3,1366.1 L1012.7,1363.6 L1007.1,1385.0 M1312.8,995.0 L1310.5,1003.6 L1328.3,1008.4 L1317.8,1062.3 L1304.2,1065.4 L1299.0,1082.2 L1280.1,1078.0 L1278.0,1083.2 L1263.3,1082.2 L1230.9,1086.8 L1234.0,1092.7 L1231.9,1099.0 L1237.1,1105.2 L1206.8,1115.7 L1202.6,1102.1 L1195.0,1101.1 M1304.2,1066.5 L1336.7,1072.8 L1355.5,1074.9 L1380.7,1075.9 L1381.7,1079.1 L1398.5,1079.1 L1399.1,1087.4 L1418.4,1088.1 L1418.0,1102.7 L1482.3,1104.2 L1482.3,1095.8 L1513.7,1096.9 L1514.4,1104.2 L1575.5,1105.2 M1237.1,1105.2 L1242.4,1119.9 L1240.3,1130.4 L1247.6,1136.7 L1246.6,1146.1 L1257.1,1151.3 L1262.3,1166.0 L1261.2,1172.3 L1278.0,1179.6 L1284.3,1187.0 L1294.8,1197.4 L1297.9,1205.8 L1295.8,1210.0 L1299.0,1216.3 L1307.3,1220.5 L1319.9,1219.4 L1328.3,1224.7 L1335.6,1233.1 L1337.7,1241.4 L1345.1,1248.8 L1352.4,1257.2 L1345.1,1268.7 L1347.2,1279.2 L1351.3,1283.3 L1356.6,1287.5 L1357.6,1292.8 L1366.0,1298.0 L1368.1,1303.3 L1391.2,1314.8 L1403.7,1320.0 L1412.1,1333.6 L1416.3,1339.9 L1414.2,1348.3 L1413.2,1356.7 L1422.6,1361.9 L1439.3,1372.4 L1451.9,1379.7 L1454.0,1385.0 M1195.0,1212.7 L1197.3,1212.1 L1195.2,1228.9 L1203.6,1229.9 L1203.6,1241.4 L1212.0,1246.7 L1224.6,1248.8 L1239.2,1248.8 L1241.3,1234.1 L1269.6,1269.1 L1280.1,1271.8 L1280.1,1275.0 L1310.5,1282.3 L1311.5,1275.0 L1345.1,1274.5 M1197.3,1212.1 L1195.0,1229.0 M1346.1,1270.8 L1410.0,1272.9 L1504.3,1274.5 L1575.5,1276.0 M1195.0,1376.6 L1198.4,1374.5 L1218.3,1364.0 L1220.4,1356.7 L1235.0,1358.8 L1238.2,1347.3 L1262.3,1351.4 L1260.2,1368.2 L1270.7,1363.0 L1271.7,1369.3 L1283.2,1369.7 L1284.3,1379.7 L1309.4,1380.2 L1309.4,1385.0 M1195.0,1373.0 L1198.4,1375.5 L1203.6,1381.8 L1198.2,1385.0 M92.2,1385.0 L90.2,1396.8 L92.3,1415.6 L98.6,1436.6 L103.8,1453.3 L110.1,1465.9 L119.5,1474.3 M161.1,1385.0 L162.5,1385.2 L151.0,1388.4 L151.0,1411.4 L130.0,1454.4 L119.5,1474.3 L110.1,1495.2 L107.0,1512.0 L108.0,1526.7 L114.3,1547.6 L108.0,1553.9 L105.9,1564.4 L110.1,1574.9 L116.4,1587.4 L119.5,1600.0 L129.0,1608.4 L132.1,1621.0 L141.5,1631.4 L145.7,1641.9 L152.0,1652.4 L160.4,1654.5 L170.9,1650.3 L181.3,1639.8 L191.8,1629.3 L195.0,1606.3 L204.4,1595.8 L208.6,1572.8 L214.9,1564.4 L223.2,1558.1 L233.7,1530.9 L241.1,1522.5 L247.3,1478.5 L251.5,1454.4 L222.4,1385.0 M130.0,1455.4 L159.3,1496.3 L184.5,1509.9 L189.7,1541.3 L198.1,1553.9 L214.9,1564.4 M30.1,1514.1 L107.0,1512.0 M251.5,1454.4 L363.6,1411.4 M146.8,1646.1 L144.7,1658.7 L149.9,1669.2 L160.4,1676.5 L166.7,1690.1 L166.7,1698.5 L160.4,1711.1 L158.3,1725.7 L162.5,1740.4 L167.7,1753.0 L167.7,1757.2 M390.4,1385.0 L388.8,1390.5 L382.5,1392.6 L380.4,1407.2 L375.2,1413.5 L373.1,1434.5 L361.5,1434.5 L355.3,1442.9 M533.3,1385.0 L535.7,1388.4 L529.4,1398.9 L524.2,1401.0 L516.9,1414.6 L527.3,1417.7 L552.5,1418.8 L560.9,1424.0 L564.0,1432.4 L573.4,1433.4 L578.7,1425.0 L575.5,1411.4 L572.4,1403.0 L570.3,1395.7 L575.5,1392.6 L573.4,1388.4 L575.2,1385.0 M564.0,1432.4 L569.2,1442.9 L575.5,1457.5 L581.8,1468.0 L577.6,1475.3 L581.8,1480.6 L586.0,1495.2 L592.3,1505.7 L593.3,1514.1 L591.2,1522.5 L598.6,1536.1 L594.4,1545.5 L596.5,1558.1 L592.3,1568.6 L590.2,1575.9 L592.3,1587.4 L595.4,1595.8 L593.3,1602.1 L599.6,1612.6 L607.0,1625.2 L610.1,1639.8 L611.2,1652.4 L605.9,1665.0 L607.0,1677.5 L611.2,1690.1 L615.3,1700.6 L617.4,1709.0 M638.7,1385.0 L645.7,1387.3 L649.0,1385.0 M681.3,1385.0 L682.4,1388.4 L681.3,1399.9 L671.9,1397.8 L659.3,1431.3 L680.3,1437.6 L683.4,1441.8 L680.3,1453.3 L669.8,1465.9 L664.6,1476.4 L664.6,1489.0 L662.5,1505.7 L661.4,1526.7 L658.3,1537.2 L651.0,1545.5 L645.7,1551.8 L636.3,1552.9 L633.2,1566.5 L627.9,1577.0 L623.7,1581.2 L622.7,1587.4 L626.9,1592.7 L621.6,1600.0 L623.7,1606.3 L619.5,1616.8 L622.7,1633.5 L619.5,1644.0 L620.6,1652.4 L615.3,1662.9 L620.6,1668.1 L614.3,1679.6 L616.4,1690.1 L619.5,1700.6 L618.5,1711.1 L611.2,1723.6 L602.8,1736.2 L599.6,1744.6 M906.0,1385.0 L904.8,1388.4 L914.2,1390.5 L914.2,1403.0 L921.5,1404.7 L919.4,1419.8 L926.8,1421.9 L925.7,1428.2 L917.3,1427.8 L913.1,1463.8 L906.9,1506.8 L921.5,1509.9 L921.5,1513.1 M921.5,1513.1 L995.9,1514.1 L1017.9,1420.9 M921.5,1513.1 L898.5,1681.7 M926.8,1683.8 L926.8,1757.2 M1007.1,1385.0 L1005.3,1392.6 L1009.5,1405.1 L1017.9,1419.8 L1032.6,1430.3 L1041.0,1442.9 L1053.5,1451.2 L1068.2,1457.5 L1078.7,1459.6 L1088.1,1458.6 L1097.5,1465.9 L1105.9,1471.1 L1116.4,1470.1 L1124.8,1465.9 L1133.2,1472.2 L1145.7,1478.5 L1156.2,1482.7 L1173.0,1482.7 L1183.4,1480.6 L1191.8,1484.8 L1195.0,1485.9 M1116.4,1471.1 L1099.6,1480.6 L1120.6,1481.6 L1129.0,1489.0 L1136.3,1489.0 L1121.6,1503.6 L1125.8,1506.8 L1124.8,1515.1 L1159.4,1523.5 L1156.2,1540.3 L1143.6,1537.6 L1140.5,1553.9 L1136.3,1577.0 L1151.0,1580.1 L1154.1,1561.2 L1174.0,1565.4 L1163.5,1618.9 L1180.3,1607.3 L1179.3,1637.7 L1170.9,1644.0 L1181.4,1654.5 L1195.0,1657.1 M1195.0,1388.1 L1190.8,1390.5 L1195.0,1398.1 M1195.0,1421.1 L1179.3,1432.4 L1195.0,1455.6 M1195.0,1464.2 L1177.2,1482.7 M1152.0,1725.7 L1139.4,1721.5 L1135.3,1732.0 L1136.3,1743.5 L1143.6,1745.6 L1140.5,1757.2 M1309.4,1385.0 L1304.8,1415.6 L1344.6,1425.0 L1344.0,1440.8 L1357.2,1441.2 L1356.6,1468.4 L1356.6,1494.8 L1381.7,1494.2 L1380.7,1573.8 L1376.5,1574.9 L1376.9,1580.7 L1329.3,1610.5 M1357.6,1468.4 L1407.9,1469.1 L1408.3,1459.2 L1484.4,1460.0 L1575.5,1463.4 M1380.7,1574.9 L1407.9,1575.3 L1407.9,1603.8 L1434.1,1604.2 L1434.1,1611.5 L1448.8,1612.2 L1448.8,1631.0 L1489.6,1632.5 L1488.6,1659.1 L1524.8,1659.7 L1524.2,1673.3 L1506.4,1673.8 L1505.3,1687.0 L1509.5,1687.6 L1509.5,1699.5 L1512.7,1700.2 L1512.7,1712.7 L1541.6,1713.2 L1541.0,1757.2 M1541.6,1737.3 L1575.5,1737.9 M1195.0,1485.9 L1196.3,1485.8 L1202.6,1494.2 L1212.0,1494.2 L1215.1,1507.8 L1223.5,1512.0 L1231.9,1514.1 L1240.3,1521.4 L1248.7,1527.7 L1257.1,1534.0 L1261.2,1549.7 L1266.5,1548.7 L1278.0,1550.8 L1281.1,1560.2 L1282.2,1569.6 L1290.6,1581.2 L1299.0,1580.1 L1310.5,1587.4 L1315.7,1597.9 L1324.1,1605.2 L1329.3,1610.5 L1335.6,1615.7 L1338.8,1630.4 L1335.6,1643.0 L1340.9,1644.0 L1349.2,1656.6 L1357.6,1671.3 L1363.9,1671.3 L1361.8,1677.5 L1372.3,1690.1 L1375.4,1697.4 L1383.8,1698.5 L1385.9,1709.0 L1393.2,1719.4 L1401.6,1724.7 L1407.9,1723.6 L1419.4,1736.2 L1418.4,1757.2 M1454.0,1385.0 L1464.5,1407.2 L1464.5,1419.8 L1468.7,1426.1 L1469.7,1436.6 L1479.2,1442.9 L1480.2,1453.3 L1484.4,1460.0 L1483.3,1474.3 L1477.1,1484.8 L1479.2,1493.1 L1475.0,1501.5 L1480.2,1514.1 L1487.5,1522.5 L1484.4,1528.8 L1487.5,1536.1 L1500.1,1543.4 L1510.6,1551.8 L1521.1,1553.9 L1533.6,1560.2 L1544.1,1562.3 L1550.4,1572.8 L1558.8,1583.2 L1567.2,1593.7 L1575.5,1600.0 M1195.0,1657.1 L1199.4,1657.6 L1201.5,1674.4 L1212.0,1680.7 L1214.1,1668.7 L1235.0,1675.0 L1235.7,1678.6 L1274.9,1688.0 L1269.6,1714.2 L1274.9,1714.8 L1275.5,1718.4 L1289.5,1721.5 L1290.2,1738.3 L1292.7,1748.8 L1291.6,1757.2 M1198.2,1385.0 L1195.0,1388.1 M1195.0,1398.1 L1200.5,1408.3 L1208.9,1405.1 L1212.0,1410.4 L1195.0,1421.1 M1195.0,1455.6 L1198.4,1460.7 L1195.0,1464.2"/>
</g>
<g fill="none" stroke="#fff" stroke-width="5.6" stroke-linejoin="round" stroke-linecap="round">
<path d="M30.1,222.8 L189.7,221.7 L289.3,237.9 L280.9,245.6 L278.8,255.0 L274.6,259.9 L279.8,264.5 L292.4,261.3 L297.6,264.5 L300.8,277.1 L302.9,286.5 L297.6,292.8 L298.7,304.3 L295.5,314.8 L297.6,320.0 L292.4,327.3 L287.2,331.5 L286.1,337.8 L289.3,343.1 L289.3,348.3 L276.7,351.4 L269.3,359.8 L267.2,369.2 L263.1,379.7 L248.4,377.6 L229.5,378.7 L214.9,375.5 L204.4,379.7 L198.1,388.1 L193.9,397.5 L200.2,403.8 L202.3,419.5 L204.0,438.4 L201.2,448.9 L202.3,461.4 L204.4,471.9 L210.7,480.3 L219.1,487.6 L224.3,495.0 L233.7,500.2 L248.4,505.4 L258.9,504.4 L262.0,513.8 L271.4,522.2 L274.6,527.4 L281.9,531.6 L287.2,540.0 L288.2,549.4 L291.3,562.0 L296.6,567.3 L308.1,571.4 L301.8,575.6 L293.4,577.7 L294.5,585.1 L298.7,595.5 L307.1,601.8 L317.5,601.8 L325.1,605.0 M415.0,526.0 L405.5,523.3 L397.2,527.4 L390.9,535.8 L384.6,543.2 L376.2,555.7 L372.0,568.3 L363.6,583.0 L357.3,595.5 L354.0,605.0 M415.0,526.0 L418.4,530.6 L425.7,543.2 L434.1,553.6 L451.9,559.9 L554.6,596.6 L550.4,585.1 L554.6,576.7 L551.4,566.2 L556.7,553.6 L554.6,545.3 L558.8,530.6 L558.8,518.0 L573.4,514.9 L583.9,518.0 L602.8,505.4 L619.5,507.5 L630.0,507.5 L640.5,512.8 L653.1,503.3 L662.5,495.0 L671.9,499.2 L680.3,503.3 L684.5,513.8 L688.7,532.7 L707.5,540.0 L762.0,554.7 L759.9,564.1 L766.2,568.3 L783.0,570.4 L789.3,578.8 L805.0,572.8 M434.1,553.6 L435.1,564.1 L428.9,568.3 L426.8,583.0 L429.9,593.4 L429.9,605.0 M805.0,572.8 L808.4,571.4 L821.0,557.8 L839.8,550.5 L852.4,556.8 L877.5,557.8 L900.6,550.5 L927.8,549.4 L954.0,511.7 L960.3,487.6 L957.2,482.4 L1000.1,372.0 L1022.1,375.5 L1022.1,381.8 L1076.6,391.9 L1081.8,363.4 L1112.2,367.2 L1189.7,368.8 L1195.0,369.9 M927.8,549.4 L926.8,557.8 L934.1,580.9 L921.5,597.6 L918.9,605.0 M1195.0,369.9 L1219.3,377.6 L1245.5,377.6 L1265.4,356.7 L1373.3,220.5 M1265.4,357.3 L1575.5,363.4 M325.1,605.0 L328.0,605.2 L347.9,619.9 L354.0,605.0 M453.3,681.9 L520.0,731.0 L510.6,736.2 L508.5,746.7 L502.2,753.0 L501.1,762.4 L497.0,771.8 L505.3,781.2 L512.7,786.5 L511.6,794.9 L505.3,797.0 L500.1,811.6 L493.8,813.7 L492.8,822.1 L479.1,830.5 L475.0,845.2 L470.8,853.5 L451.9,866.1 L447.7,878.7 L444.6,891.3 L433.0,894.4 L424.7,907.0 L456.1,919.5 L470.8,926.9 L477.1,935.3 L479.1,947.8 L478.1,960.4 L477.1,977.2 L477.7,995.0 M805.0,930.5 L783.0,937.3 L777.7,956.2 L772.5,979.3 L784.0,985.5 L785.4,995.0 M918.9,605.0 L917.3,614.7 L920.5,631.4 L923.6,644.0 L921.5,660.8 L925.7,662.9 L928.2,705.8 L900.6,699.5 L892.2,748.8 L874.4,745.6 L873.3,757.2 L862.9,755.1 L853.4,816.9 L849.2,822.1 L845.0,822.1 L835.6,868.2 L831.4,868.2 L825.1,893.3 L818.9,925.8 L805.0,930.5 M30.1,1291.7 L54.6,1297.6 L122.7,1296.3 L145.7,1257.2 L152.0,1258.2 L164.6,1251.9 L173.0,1255.1 L298.7,1260.9 L317.5,1323.2 L313.3,1344.1 L322.8,1344.1 L322.4,1375.1 L339.0,1385.0 M477.7,995.0 L482.3,1011.0 L488.6,1031.9 L495.9,1045.5 L507.4,1046.6 L511.6,1059.1 L515.8,1073.8 L521.1,1094.8 L522.1,1109.4 L527.3,1096.9 L530.5,1087.4 L544.1,1082.2 L554.6,1092.7 L559.8,1093.7 L561.9,1113.6 L568.2,1132.5 L571.3,1149.2 L586.0,1150.3 L590.2,1157.6 L600.7,1163.9 L609.1,1151.3 L617.4,1141.9 L619.5,1134.6 L632.1,1124.1 L646.8,1117.8 L654.1,1109.4 L662.5,1106.3 L720.1,1137.7 L722.2,1126.2 L726.4,1117.8 L743.2,1122.0 L763.1,1115.7 L768.3,1090.6 L767.3,1073.8 L776.7,1070.7 L766.2,1019.3 L770.4,1009.9 L780.9,1008.9 L785.1,998.4 L785.4,995.0 M720.1,1137.7 L741.1,1220.5 L742.1,1262.4 L744.2,1312.7 L743.2,1325.3 L735.8,1367.2 L719.1,1365.1 L720.1,1371.4 L731.6,1377.6 L733.4,1385.0 M339.0,1385.0 L353.2,1392.6 L359.4,1405.1 L366.8,1408.3 L365.7,1415.6 L361.5,1421.9 L358.4,1432.4 L350.0,1438.7 L347.9,1442.9 L352.1,1449.1 L354.2,1457.5 L376.2,1463.8 L384.6,1465.9 L415.0,1473.9 M415.0,1473.9 L442.5,1482.7 L490.7,1528.8 L494.9,1529.2 L530.5,1564.4 L529.9,1594.1 L550.4,1594.1 L559.8,1614.7 L558.8,1641.9 L601.7,1757.2 M733.4,1385.0 L735.8,1404.1 L769.4,1412.5 L776.7,1424.0 L787.2,1432.4 L795.5,1436.6 L805.0,1448.3 M805.0,1451.0 L801.8,1461.7 L803.9,1476.4 L805.0,1478.8 M805.0,1701.4 L785.1,1704.8 L790.3,1757.2 M805.0,1448.3 L805.2,1449.1 L805.0,1451.0 M805.0,1478.8 L809.4,1489.0 L815.7,1505.7 L817.8,1522.5 L817.8,1547.6 L818.9,1564.4 L823.0,1577.0 L831.4,1589.5 L840.9,1592.7 L827.2,1594.8 L822.0,1606.3 L822.0,1614.7 L829.3,1627.2 L839.8,1639.8 L833.5,1652.4 L827.2,1660.8 L825.1,1677.5 L826.8,1697.7 M805.0,1701.4 L826.8,1697.7 L970.8,1672.9 L1080.8,1691.2 L1086.0,1714.8 L1112.2,1715.3 L1120.6,1702.7 L1131.1,1700.6 L1139.4,1704.8 L1129.0,1711.1 L1143.6,1713.2 L1152.0,1719.4 L1158.3,1728.9 L1170.9,1729.9 L1183.4,1727.8 L1195.0,1728.4 M1195.0,1728.4 L1198.4,1727.8 L1204.7,1729.9 L1215.1,1727.8 L1223.5,1730.3 L1234.0,1730.3 L1227.7,1751.9 L1236.1,1751.9 L1236.1,1757.2 M429.9,605.0 L428.5,606.9 L426.6,609.3 L418.7,612.4 L416.7,617.1 L417.9,621.8 L418.7,626.6 L417.1,630.5 L412.8,635.2 L411.2,639.9 L412.8,645.4 L414.8,648.6 L413.6,653.3 L414.4,658.8 L414.4,665.8 L412.8,672.9 L413.6,679.2 L414.4,684.7 L414.0,691.0 L453.3,681.9"/>
</g>

<circle cx="782.1" cy="302.2" r="7" fill="#fff"/>
<circle cx="471.2" cy="501.3" r="7" fill="#fff"/>
<circle cx="687.2" cy="554.0" r="7" fill="#fff"/>
<circle cx="1008.5" cy="544.6" r="7" fill="#fff"/>
<circle cx="1446.5" cy="415.6" r="7" fill="#fff"/>
<circle cx="452.5" cy="716.3" r="7" fill="#fff"/>
<circle cx="1217.4" cy="712.5" r="7" fill="#fff"/>
<circle cx="593.3" cy="936.3" r="7" fill="#fff"/>
<circle cx="1219.3" cy="952.4" r="7" fill="#fff"/>
<circle cx="816.3" cy="987.6" r="7" fill="#fff"/>
<circle cx="373.5" cy="1019.3" r="7" fill="#fff"/>
<circle cx="596.3" cy="1080.5" r="7" fill="#fff"/>
<circle cx="999.5" cy="1087.4" r="7" fill="#fff"/>
<circle cx="1019.4" cy="1264.5" r="7" fill="#fff"/>
<circle cx="538.2" cy="1320.4" r="7" fill="#fff"/>
<circle cx="1429.5" cy="1321.5" r="7" fill="#fff"/>
<circle cx="226.4" cy="1352.5" r="7" fill="#fff"/>
<circle cx="403.4" cy="1455.0" r="7" fill="#fff"/>
<circle cx="1242.4" cy="1499.4" r="7" fill="#fff"/>
<circle cx="542.4" cy="1578.2" r="7" fill="#fff"/>
<circle cx="757.4" cy="1597.5" r="7" fill="#fff"/>
<circle cx="219.5" cy="1647.2" r="7" fill="#fff"/>
<text class="mono city" x="790.7" y="291.6" xml:space="preserve">METÁN</text>
<text class="mono city" x="479.8" y="490.7" xml:space="preserve">CAFAYATE</text>
<text class="mono city" x="695.8" y="543.4" xml:space="preserve">TRANCAS</text>
<text class="mono city" x="1017.1" y="534.0" xml:space="preserve">NUEVA ESPERANZA</text>
<text class="mono city" x="1455.1" y="405.0" xml:space="preserve">MONTE QUEMADO</text>
<text class="mono city" x="461.1" y="705.7" xml:space="preserve">SANTA MARÍA</text>
<text class="mono city" x="1226.0" y="701.9" xml:space="preserve">SANTOS LUGARES</text>
<text class="mono city" x="601.9" y="925.7" xml:space="preserve">CONCEPCIÓN</text>
<text class="mono city" x="1227.9" y="941.8" xml:space="preserve">CASPI CORRAL</text>
<text class="mono city" x="824.9" y="977.0" xml:space="preserve">T. DE RÍO HONDO</text>
<text class="mono city" x="382.1" y="1008.7" xml:space="preserve">ANDALGALÁ</text>
<text class="mono city" x="604.9" y="1069.9" xml:space="preserve">LA COCHA</text>
<text class="mono city" x="1008.1" y="1076.8" xml:space="preserve">SANTIAGO DEL ESTERO</text>
<text class="mono city" x="1028.0" y="1253.9" xml:space="preserve">LORETO</text>
<text class="mono city" x="546.8" y="1309.8" xml:space="preserve">S. F. V. C.</text>
<text class="mono city" x="1438.1" y="1310.9" xml:space="preserve">AÑATUYA</text>
<text class="mono city" x="235.0" y="1341.9" xml:space="preserve">AIMOGASTA</text>
<text class="mono city" x="412.0" y="1444.4" xml:space="preserve">CHUMBICHA</text>
<text class="mono city" x="1251.0" y="1488.8" xml:space="preserve">LOS TELARES</text>
<text class="mono city" x="551.0" y="1567.6" xml:space="preserve">SAN MARTÍN</text>
<text class="mono city" x="766.0" y="1586.9" xml:space="preserve">RECREO</text>
<text class="mono city" x="228.1" y="1636.6" xml:space="preserve">LA RIOJA</text>
<rect x="35.6" y="1652.9" width="330.7" height="100.2" fill="#6b6b6b" fill-opacity="0.8" stroke="#808080" stroke-opacity="0.45" stroke-width="1.5"/>
<rect x="49.1" y="1667.3" width="302.8" height="71.6" fill="none" stroke="#ffa500" stroke-width="5.9"/>
<text class="mono" font-size="22.2" fill="#fff" x="60.0" y="1697.2" xml:space="preserve">Avisos Meteorológicos</text>
<text class="mono" font-size="22.2" fill="#fff" x="60.0" y="1722.6" xml:space="preserve">a Muy Corto Plazo</text>
</g>
<rect x="1578" y="217.5" width="152" height="1542" fill="#1a1a1a"/>
<g clip-path="url(#cr)">
<polygon points="1588.3,252.3 1603.0,252.3 1603.0,251.0 1684.0,251.0 1687.3,255.0 1687.3,1721.0 1684.0,1725.5 1660.0,1727.0 1608.0,1727.0 1608.0,1725.5 1594.0,1725.5 1588.6,1721.3 1588.6,1693.0 1586.3,1693.0 1586.3,1645.0 1584.0,1645.0 1584.0,1587.0 1582.0,1587.0 1582.0,390.0 1584.0,390.0 1584.0,332.0 1586.3,332.0 1586.3,283.0 1588.3,283.0" fill="#3d6698"/>
<path d="M1688,438.8L1680.6,442.0L1688,445.2zM1688,451.5L1680.6,454.7L1688,457.9zM1688,464.2L1680.6,467.4L1688,470.6zM1688,476.8L1680.6,480.0L1688,483.2zM1688,489.5L1680.6,492.7L1688,495.9zM1688,502.2L1680.6,505.4L1688,508.6zM1688,514.9L1680.6,518.1L1688,521.3zM1688,527.6L1680.6,530.8L1688,534.0zM1688,540.2L1680.6,543.4L1688,546.6zM1688,552.9L1680.6,556.1L1688,559.3zM1688,565.6L1680.6,568.8L1688,572.0zM1688,578.3L1680.6,581.5L1688,584.7zM1688,591.0L1680.6,594.2L1688,597.4zM1688,603.6L1680.6,606.8L1688,610.0zM1688,616.3L1680.6,619.5L1688,622.7zM1688,629.0L1680.6,632.2L1688,635.4zM1688,641.7L1680.6,644.9L1688,648.1zM1688,654.4L1680.6,657.6L1688,660.8zM1688,667.0L1680.6,670.2L1688,673.4zM1688,679.7L1680.6,682.9L1688,686.1zM1688,692.4L1680.6,695.6L1688,698.8zM1688,705.1L1680.6,708.3L1688,711.5zM1688,717.8L1680.6,721.0L1688,724.2zM1688,730.4L1680.6,733.6L1688,736.8zM1688,743.1L1680.6,746.3L1688,749.5zM1688,755.8L1680.6,759.0L1688,762.2zM1688,768.5L1680.6,771.7L1688,774.9zM1688,781.2L1680.6,784.4L1688,787.6zM1688,793.8L1680.6,797.0L1688,800.2zM1688,806.5L1680.6,809.7L1688,812.9zM1688,819.2L1680.6,822.4L1688,825.6zM1688,831.9L1680.6,835.1L1688,838.3zM1688,844.6L1680.6,847.8L1688,851.0zM1688,857.2L1680.6,860.4L1688,863.6zM1688,869.9L1680.6,873.1L1688,876.3zM1688,882.6L1680.6,885.8L1688,889.0zM1688,895.3L1680.6,898.5L1688,901.7zM1688,908.0L1680.6,911.2L1688,914.4zM1688,920.6L1680.6,923.8L1688,927.0zM1688,933.3L1680.6,936.5L1688,939.7zM1688,946.0L1680.6,949.2L1688,952.4zM1688,958.7L1680.6,961.9L1688,965.1zM1688,971.4L1680.6,974.6L1688,977.8zM1688,984.0L1680.6,987.2L1688,990.4zM1688,996.7L1680.6,999.9L1688,1003.1zM1688,1009.4L1680.6,1012.6L1688,1015.8zM1688,1022.1L1680.6,1025.3L1688,1028.5zM1688,1034.8L1680.6,1038.0L1688,1041.2zM1688,1047.4L1680.6,1050.6L1688,1053.8zM1688,1060.1L1680.6,1063.3L1688,1066.5zM1688,1072.8L1680.6,1076.0L1688,1079.2zM1688,1085.5L1680.6,1088.7L1688,1091.9zM1688,1098.2L1680.6,1101.4L1688,1104.6zM1688,1110.8L1680.6,1114.0L1688,1117.2zM1688,1123.5L1680.6,1126.7L1688,1129.9zM1688,1136.2L1680.6,1139.4L1688,1142.6zM1688,1148.9L1680.6,1152.1L1688,1155.3zM1688,1161.6L1680.6,1164.8L1688,1168.0zM1688,1174.2L1680.6,1177.4L1688,1180.6zM1688,1186.9L1680.6,1190.1L1688,1193.3zM1688,1199.6L1680.6,1202.8L1688,1206.0zM1688,1212.3L1680.6,1215.5L1688,1218.7zM1688,1225.0L1680.6,1228.2L1688,1231.4zM1688,1237.6L1680.6,1240.8L1688,1244.0zM1688,1250.3L1680.6,1253.5L1688,1256.7zM1688,1263.0L1680.6,1266.2L1688,1269.4zM1688,1275.7L1680.6,1278.9L1688,1282.1zM1688,1288.4L1680.6,1291.6L1688,1294.8zM1688,1301.0L1680.6,1304.2L1688,1307.4zM1688,1313.7L1680.6,1316.9L1688,1320.1zM1688,1326.4L1680.6,1329.6L1688,1332.8zM1688,1339.1L1680.6,1342.3L1688,1345.5zM1688,1351.8L1680.6,1355.0L1688,1358.2zM1688,1364.4L1680.6,1367.6L1688,1370.8zM1688,1377.1L1680.6,1380.3L1688,1383.5zM1688,1389.8L1680.6,1393.0L1688,1396.2zM1688,1402.5L1680.6,1405.7L1688,1408.9zM1688,1415.2L1680.6,1418.4L1688,1421.6zM1688,1427.8L1680.6,1431.0L1688,1434.2zM1688,1440.5L1680.6,1443.7L1688,1446.9zM1688,1453.2L1680.6,1456.4L1688,1459.6zM1688,1465.9L1680.6,1469.1L1688,1472.3zM1688,1478.6L1680.6,1481.8L1688,1485.0zM1688,1491.2L1680.6,1494.4L1688,1497.6zM1688,1503.9L1680.6,1507.1L1688,1510.3zM1688,1516.6L1680.6,1519.8L1688,1523.0zM1688,1529.3L1680.6,1532.5L1688,1535.7z" fill="#1a1a1a"/>
<polygon points="1580.1,983.0 1593.9,983.0 1593.9,994.3 1580.1,993.1" fill="#3a70a8"/>
<polygon points="1582.6,1003.1 1601.4,1004.4 1630.4,1009.4 1679.4,1023.2 1687.2,1025.8 1687.2,1054.7 1679.4,1062.2 1645.5,1067.9 1630.4,1059.7 1611.5,1038.3 1595.2,1015.7" fill="#3580b8"/>
<polygon points="1630.4,1029.5 1650.5,1032.0 1679.4,1048.4 1679.4,1057.2 1650.5,1042.1 1630.4,1033.3" fill="#3d6698"/>
<polygon points="1630.4,1010.7 1679.4,1027.0 1679.4,1020.7 1630.4,1006.9" fill="#3d6698"/>
<polygon points="1614.0,994.3 1679.4,999.3 1687.2,1000.0 1687.2,1003.7 1679.4,1002.5 1614.0,995.8" fill="#3078b2"/>
<ellipse cx="1653.0" cy="1059.1" rx="24.5" ry="8.8" fill="#27a3d2"/>
<polygon points="1611.5,1035.8 1630.4,1033.3 1645.5,1044.6 1630.4,1050.9 1620.3,1044.6" fill="#2a96c8"/>
<polygon points="1698.3,989.9 1717.1,989.3 1719.0,993.7 1699.5,993.7" fill="#3f6ea8"/>
<polygon points="1709.0,995.6 1727.2,994.9 1727.2,1001.2 1712.1,999.3" fill="#2d8cc2"/>
<polygon points="1687.2,999.3 1727.2,1004.4 1727.2,1010.7 1717.1,1006.9 1687.2,1003.1" fill="#2d8cc2"/>
<polygon points="1719.6,1013.8 1727.2,1011.9 1727.2,1017.0 1722.2,1017.0" fill="#3f6ea8"/>
<polygon points="1687.2,1020.7 1698.3,1024.5 1727.2,1034.6 1727.2,1044.6 1708.3,1035.8 1687.2,1030.8" fill="#2d8cc2"/>
<polygon points="1689.5,1040.2 1703.3,1043.4 1727.2,1052.2 1727.2,1059.7 1714.6,1054.7 1689.5,1042.1" fill="#3c78b0"/>
<polygon points="1692.0,1069.1 1702.0,1069.1 1702.0,1071.7 1692.0,1071.7" fill="#3f6ea8"/>
<polygon points="1703.9,1072.3 1718.4,1071.0 1727.2,1074.8 1727.2,1088.0 1723.4,1087.4 1720.9,1079.8 1709.6,1076.1" fill="#2d8cc2"/>
<polygon points="1712.1,1081.1 1719.0,1081.7 1719.0,1086.1 1712.1,1085.5" fill="#3f6ea8"/>
<polygon points="1721.5,1094.9 1727.2,1095.5 1727.2,1099.9 1724.0,1099.9" fill="#3f6ea8"/>
<polygon points="1717.1,1112.5 1727.2,1111.3 1727.2,1116.9 1722.2,1116.3" fill="#3f6ea8"/>
<polygon points="1692.0,961.6 1703.3,960.1 1703.9,962.9 1692.6,964.1" fill="#3f6ea8"/>
<polygon points="1607.1,947.2 1612.1,947.2 1612.1,948.8 1607.1,948.8" fill="#2f86bc"/>
<polygon points="1597.0,979.9 1602.1,979.9 1602.1,981.1 1597.0,981.1" fill="#2f86bc"/>
<rect x="1601.7" y="994.9" width="2.4" height="2.4" fill="#52f234"/>
</g>
<line y1="219" y2="1758" x1="1629.4" x2="1629.4" stroke="#fff" stroke-width="1.4"/>
<line y1="219" y2="1758" x1="1679.5" x2="1679.5" stroke="#fff" stroke-width="1.4"/>
<text class="sans km" transform="translate(1608.0,219.2) rotate(90)" x="0" y="0">5 km</text>
<text class="sans km" transform="translate(1658.0,219.2) rotate(90)" x="0" y="0">10 km</text>
<text class="sans km" transform="translate(1708.5,219.2) rotate(90)" x="0" y="0">15 km</text>
<rect x="1729" y="1638.38" width="38" height="120.90" fill="#3f3f6e"/>
<rect x="1729" y="1566.20" width="38" height="72.78" fill="#3f4c7b"/>
<rect x="1729" y="1494.02" width="38" height="72.78" fill="#3f5a8a"/>
<rect x="1729" y="1421.84" width="38" height="72.78" fill="#3d6698"/>
<rect x="1729" y="1349.66" width="38" height="72.78" fill="#3b70a3"/>
<rect x="1729" y="1301.54" width="38" height="48.72" fill="#367cb0"/>
<rect x="1729" y="1253.42" width="38" height="48.72" fill="#2f8cc0"/>
<rect x="1729" y="1205.30" width="38" height="48.72" fill="#2b97c8"/>
<rect x="1729" y="1181.24" width="38" height="24.66" fill="#27a3d2"/>
<rect x="1729" y="1157.18" width="38" height="24.66" fill="#2bb0dc"/>
<rect x="1729" y="1133.12" width="38" height="24.66" fill="#52f234"/>
<rect x="1729" y="1109.06" width="38" height="24.66" fill="#4be330"/>
<rect x="1729" y="1085.00" width="38" height="24.66" fill="#45d02c"/>
<rect x="1729" y="1060.94" width="38" height="24.66" fill="#3fc02a"/>
<rect x="1729" y="1036.88" width="38" height="24.66" fill="#3aae26"/>
<rect x="1729" y="1012.82" width="38" height="24.66" fill="#349f24"/>
<rect x="1729" y="988.76" width="38" height="24.66" fill="#2d8a1e"/>
<rect x="1729" y="964.70" width="38" height="24.66" fill="#24711a"/>
<rect x="1729" y="940.64" width="38" height="24.66" fill="#eeee3c"/>
<rect x="1729" y="916.58" width="38" height="24.66" fill="#e2e238"/>
<rect x="1729" y="892.52" width="38" height="24.66" fill="#d6da34"/>
<rect x="1729" y="868.46" width="38" height="24.66" fill="#cdd032"/>
<rect x="1729" y="844.40" width="38" height="24.66" fill="#c2c22e"/>
<rect x="1729" y="820.34" width="38" height="24.66" fill="#cdaa24"/>
<rect x="1729" y="796.28" width="38" height="24.66" fill="#d4961c"/>
<rect x="1729" y="772.22" width="38" height="24.66" fill="#dc8018"/>
<rect x="1729" y="748.16" width="38" height="24.66" fill="#ea0c30"/>
<rect x="1729" y="724.10" width="38" height="24.66" fill="#c6001e"/>
<rect x="1729" y="700.04" width="38" height="24.66" fill="#bc0014"/>
<rect x="1729" y="675.98" width="38" height="24.66" fill="#ae0008"/>
<rect x="1729" y="651.92" width="38" height="24.66" fill="#9a0000"/>
<rect x="1729" y="627.86" width="38" height="24.66" fill="#c4005e"/>
<rect x="1729" y="603.80" width="38" height="24.66" fill="#da00a0"/>
<rect x="1729" y="579.74" width="38" height="24.66" fill="#e800e6"/>
<rect x="1729" y="555.68" width="38" height="24.66" fill="#cc00cc"/>
<rect x="1729" y="531.62" width="38" height="24.66" fill="#b400b4"/>
<rect x="1729" y="507.56" width="38" height="24.66" fill="#9a009a"/>
<rect x="1729" y="483.50" width="38" height="24.66" fill="#ffffff"/>
<rect x="1729" y="459.44" width="38" height="24.66" fill="#dff5ec"/>
<rect x="1729" y="435.38" width="38" height="24.66" fill="#c6f0e0"/>
<rect x="1729" y="411.32" width="38" height="24.66" fill="#b6ecd6"/>
<rect x="1729" y="387.26" width="38" height="24.66" fill="#a8eace"/>
<rect x="1729" y="339.14" width="38" height="48.72" fill="#98e4c4"/>
<rect x="1729" y="218.84" width="38" height="120.90" fill="#8ce0bc"/>
<g fill="none" stroke="#000" stroke-width="2.2">
<rect x="29" y="63" width="1548" height="153.9"/>
<rect x="29" y="218.3" width="1548" height="1540.4"/>
<rect x="1579.2" y="218.3" width="149.0" height="1540.4"/>
<rect x="1728.9" y="218.3" width="38.1" height="1540.4"/>
</g>
<line x1="1768" x2="1777.2" y1="1686.8" y2="1686.8" stroke="#000" stroke-width="2.2"/>
<text class="sans tick" x="1786.1" y="1698.4">−15</text>
<line x1="1768" x2="1777.2" y1="1606.6" y2="1606.6" stroke="#000" stroke-width="2.2"/>
<text class="sans tick" x="1786.1" y="1618.2">−10</text>
<line x1="1768" x2="1777.2" y1="1526.4" y2="1526.4" stroke="#000" stroke-width="2.2"/>
<text class="sans tick" x="1786.1" y="1538.0">−5</text>
<line x1="1768" x2="1777.2" y1="1446.2" y2="1446.2" stroke="#000" stroke-width="2.2"/>
<text class="sans tick" x="1786.1" y="1457.8">0</text>
<line x1="1768" x2="1777.2" y1="1366.0" y2="1366.0" stroke="#000" stroke-width="2.2"/>
<text class="sans tick" x="1786.1" y="1377.6">5</text>
<line x1="1768" x2="1777.2" y1="1285.8" y2="1285.8" stroke="#000" stroke-width="2.2"/>
<text class="sans tick" x="1786.1" y="1297.4">10</text>
<line x1="1768" x2="1777.2" y1="1205.6" y2="1205.6" stroke="#000" stroke-width="2.2"/>
<text class="sans tick" x="1786.1" y="1217.2">15</text>
<line x1="1768" x2="1777.2" y1="1125.4" y2="1125.4" stroke="#000" stroke-width="2.2"/>
<text class="sans tick" x="1786.1" y="1137.0">20</text>
<line x1="1768" x2="1777.2" y1="1045.2" y2="1045.2" stroke="#000" stroke-width="2.2"/>
<text class="sans tick" x="1786.1" y="1056.8">25</text>
<line x1="1768" x2="1777.2" y1="965.0" y2="965.0" stroke="#000" stroke-width="2.2"/>
<text class="sans tick" x="1786.1" y="976.6">30</text>
<line x1="1768" x2="1777.2" y1="884.8" y2="884.8" stroke="#000" stroke-width="2.2"/>
<text class="sans tick" x="1786.1" y="896.4">35</text>
<line x1="1768" x2="1777.2" y1="804.6" y2="804.6" stroke="#000" stroke-width="2.2"/>
<text class="sans tick" x="1786.1" y="816.2">40</text>
<line x1="1768" x2="1777.2" y1="724.4" y2="724.4" stroke="#000" stroke-width="2.2"/>
<text class="sans tick" x="1786.1" y="736.0">45</text>
<line x1="1768" x2="1777.2" y1="644.2" y2="644.2" stroke="#000" stroke-width="2.2"/>
<text class="sans tick" x="1786.1" y="655.8">50</text>
<line x1="1768" x2="1777.2" y1="564.0" y2="564.0" stroke="#000" stroke-width="2.2"/>
<text class="sans tick" x="1786.1" y="575.6">55</text>
<line x1="1768" x2="1777.2" y1="483.8" y2="483.8" stroke="#000" stroke-width="2.2"/>
<text class="sans tick" x="1786.1" y="495.4">60</text>
<line x1="1768" x2="1777.2" y1="403.6" y2="403.6" stroke="#000" stroke-width="2.2"/>
<text class="sans tick" x="1786.1" y="415.2">65</text>
<line x1="1768" x2="1777.2" y1="323.4" y2="323.4" stroke="#000" stroke-width="2.2"/>
<text class="sans tick" x="1786.1" y="335.0">70</text>
<line x1="1768" x2="1777.2" y1="243.2" y2="243.2" stroke="#000" stroke-width="2.2"/>
<text class="sans tick" x="1786.1" y="254.8">75</text>
<defs><g id="emb" fill="none" stroke="#2b3557" stroke-linecap="round" stroke-linejoin="round"><path d="M-10.19,-41.08L-22.49,-37.55M-10.47,-42.35L-21.34,-40.65M-10.59,-43.65L-23.39,-43.24M-10.56,-44.96L-21.51,-45.96M-10.36,-46.25L-22.87,-48.97M-10.00,-47.51L-20.38,-51.15M-9.49,-48.71L-20.96,-54.40M-8.84,-49.85L-18.02,-55.91M-8.06,-50.89L-17.78,-59.21M-7.15,-51.83L-14.56,-59.95M-6.13,-52.65L-13.53,-63.09M-5.02,-53.34L-10.23,-63.02M-3.83,-53.88L-8.46,-65.82M-2.59,-54.28L-5.27,-64.95M-1.30,-54.52L-2.88,-67.22M0.00,-54.60L0.00,-65.60M1.30,-54.52L2.88,-67.22M2.59,-54.28L5.27,-64.95M3.83,-53.88L8.46,-65.82M5.02,-53.34L10.23,-63.02M6.13,-52.65L13.53,-63.09M7.15,-51.83L14.56,-59.95M8.06,-50.89L17.78,-59.21M8.84,-49.85L18.02,-55.91M9.49,-48.71L20.96,-54.40M10.00,-47.51L20.38,-51.15M10.36,-46.25L22.87,-48.97M10.56,-44.96L21.51,-45.96M10.59,-43.65L23.39,-43.24M10.47,-42.35L21.34,-40.65M10.19,-41.08L22.49,-37.55" stroke-width="1.15" stroke-opacity="0.8"/><ellipse cx="-3.9" cy="-44.9" rx="2.7" ry="1.5" fill="#2b3557" stroke="none" fill-opacity="0.85"/><ellipse cx="3.9" cy="-44.9" rx="2.7" ry="1.5" fill="#2b3557" stroke="none" fill-opacity="0.85"/><path d="M-1.2,-42.8L-2,-40.6L2,-40.6L1.2,-42.8" stroke-width="0.6" stroke-opacity="0.7"/><g stroke-width="0.75" stroke-opacity="0.75" fill="#2b3557" fill-opacity="0.22"><ellipse cx="23.18" cy="-35.82" rx="2.9" ry="1.3" transform="rotate(76.7 23.18 -35.82)"/><ellipse cx="20.02" cy="-33.05" rx="2.9" ry="1.3" transform="rotate(20.7 20.02 -33.05)"/><ellipse cx="26.47" cy="-31.54" rx="2.9" ry="1.3" transform="rotate(83.9 26.47 -31.54)"/><ellipse cx="22.99" cy="-29.19" rx="2.9" ry="1.3" transform="rotate(27.9 22.99 -29.19)"/><ellipse cx="29.32" cy="-26.75" rx="2.9" ry="1.3" transform="rotate(90.5 29.32 -26.75)"/><ellipse cx="25.59" cy="-24.82" rx="2.9" ry="1.3" transform="rotate(34.5 25.59 -24.82)"/><ellipse cx="31.68" cy="-21.53" rx="2.9" ry="1.3" transform="rotate(96.8 31.68 -21.53)"/><ellipse cx="27.76" cy="-20.01" rx="2.9" ry="1.3" transform="rotate(40.8 27.76 -20.01)"/><ellipse cx="33.52" cy="-15.95" rx="2.9" ry="1.3" transform="rotate(102.7 33.52 -15.95)"/><ellipse cx="29.47" cy="-14.84" rx="2.9" ry="1.3" transform="rotate(46.7 29.47 -14.84)"/><ellipse cx="34.81" cy="-10.11" rx="2.9" ry="1.3" transform="rotate(108.3 34.81 -10.11)"/><ellipse cx="30.67" cy="-9.41" rx="2.9" ry="1.3" transform="rotate(52.3 30.67 -9.41)"/><ellipse cx="35.53" cy="-4.10" rx="2.9" ry="1.3" transform="rotate(113.9 35.53 -4.10)"/><ellipse cx="31.35" cy="-3.80" rx="2.9" ry="1.3" transform="rotate(57.9 31.35 -3.80)"/><ellipse cx="35.68" cy="1.98" rx="2.9" ry="1.3" transform="rotate(119.3 35.68 1.98)"/><ellipse cx="31.48" cy="1.88" rx="2.9" ry="1.3" transform="rotate(63.3 31.48 1.88)"/><ellipse cx="35.25" cy="8.04" rx="2.9" ry="1.3" transform="rotate(124.8 35.25 8.04)"/><ellipse cx="31.08" cy="7.54" rx="2.9" ry="1.3" transform="rotate(68.8 31.08 7.54)"/><ellipse cx="34.25" cy="13.98" rx="2.9" ry="1.3" transform="rotate(130.4 34.25 13.98)"/><ellipse cx="30.15" cy="13.08" rx="2.9" ry="1.3" transform="rotate(74.4 30.15 13.08)"/><ellipse cx="32.69" cy="19.70" rx="2.9" ry="1.3" transform="rotate(136.2 32.69 19.70)"/><ellipse cx="28.70" cy="18.39" rx="2.9" ry="1.3" transform="rotate(80.2 28.70 18.39)"/><ellipse cx="30.59" cy="25.12" rx="2.9" ry="1.3" transform="rotate(142.2 30.59 25.12)"/><ellipse cx="26.76" cy="23.40" rx="2.9" ry="1.3" transform="rotate(86.2 26.76 23.40)"/><ellipse cx="27.99" cy="30.14" rx="2.9" ry="1.3" transform="rotate(148.6 27.99 30.14)"/><ellipse cx="24.38" cy="28.00" rx="2.9" ry="1.3" transform="rotate(92.6 24.38 28.00)"/><ellipse cx="24.92" cy="34.69" rx="2.9" ry="1.3" transform="rotate(155.5 24.92 34.69)"/><ellipse cx="21.59" cy="32.13" rx="2.9" ry="1.3" transform="rotate(99.5 21.59 32.13)"/><ellipse cx="21.42" cy="38.69" rx="2.9" ry="1.3" transform="rotate(163.0 21.42 38.69)"/><ellipse cx="18.45" cy="35.72" rx="2.9" ry="1.3" transform="rotate(107.0 18.45 35.72)"/><ellipse cx="17.55" cy="42.06" rx="2.9" ry="1.3" transform="rotate(171.0 17.55 42.06)"/><ellipse cx="15.03" cy="38.70" rx="2.9" ry="1.3" transform="rotate(115.0 15.03 38.70)"/><ellipse cx="13.36" cy="44.75" rx="2.9" ry="1.3" transform="rotate(179.7 13.36 44.75)"/><ellipse cx="11.37" cy="41.05" rx="2.9" ry="1.3" transform="rotate(123.7 11.37 41.05)"/><ellipse cx="8.92" cy="46.69" rx="2.9" ry="1.3" transform="rotate(189.0 8.92 46.69)"/><ellipse cx="7.56" cy="42.72" rx="2.9" ry="1.3" transform="rotate(133.0 7.56 42.72)"/><ellipse cx="4.31" cy="47.85" rx="2.9" ry="1.3" transform="rotate(198.8 4.31 47.85)"/><ellipse cx="3.64" cy="43.71" rx="2.9" ry="1.3" transform="rotate(142.8 3.64 43.71)"/><ellipse cx="-0.38" cy="48.20" rx="2.9" ry="1.3" transform="rotate(-151.2 -0.38 48.20)"/><ellipse cx="-0.32" cy="44.00" rx="2.9" ry="1.3" transform="rotate(-207.2 -0.32 44.00)"/><ellipse cx="-5.07" cy="47.72" rx="2.9" ry="1.3" transform="rotate(-141.2 -5.07 47.72)"/><ellipse cx="-4.28" cy="43.59" rx="2.9" ry="1.3" transform="rotate(-197.2 -4.28 43.59)"/><ellipse cx="-20.02" cy="-33.05" rx="2.9" ry="1.3" transform="rotate(103.3 -20.02 -33.05)"/><ellipse cx="-23.18" cy="-35.82" rx="2.9" ry="1.3" transform="rotate(159.3 -23.18 -35.82)"/><ellipse cx="-22.99" cy="-29.19" rx="2.9" ry="1.3" transform="rotate(96.1 -22.99 -29.19)"/><ellipse cx="-26.47" cy="-31.54" rx="2.9" ry="1.3" transform="rotate(152.1 -26.47 -31.54)"/><ellipse cx="-25.59" cy="-24.82" rx="2.9" ry="1.3" transform="rotate(89.5 -25.59 -24.82)"/><ellipse cx="-29.32" cy="-26.75" rx="2.9" ry="1.3" transform="rotate(145.5 -29.32 -26.75)"/><ellipse cx="-27.76" cy="-20.01" rx="2.9" ry="1.3" transform="rotate(83.2 -27.76 -20.01)"/><ellipse cx="-31.68" cy="-21.53" rx="2.9" ry="1.3" transform="rotate(139.2 -31.68 -21.53)"/><ellipse cx="-29.47" cy="-14.84" rx="2.9" ry="1.3" transform="rotate(77.3 -29.47 -14.84)"/><ellipse cx="-33.52" cy="-15.95" rx="2.9" ry="1.3" transform="rotate(133.3 -33.52 -15.95)"/><ellipse cx="-30.67" cy="-9.41" rx="2.9" ry="1.3" transform="rotate(71.7 -30.67 -9.41)"/><ellipse cx="-34.81" cy="-10.11" rx="2.9" ry="1.3" transform="rotate(127.7 -34.81 -10.11)"/><ellipse cx="-31.35" cy="-3.80" rx="2.9" ry="1.3" transform="rotate(66.1 -31.35 -3.80)"/><ellipse cx="-35.53" cy="-4.10" rx="2.9" ry="1.3" transform="rotate(122.1 -35.53 -4.10)"/><ellipse cx="-31.48" cy="1.88" rx="2.9" ry="1.3" transform="rotate(60.7 -31.48 1.88)"/><ellipse cx="-35.68" cy="1.98" rx="2.9" ry="1.3" transform="rotate(116.7 -35.68 1.98)"/><ellipse cx="-31.08" cy="7.54" rx="2.9" ry="1.3" transform="rotate(55.2 -31.08 7.54)"/><ellipse cx="-35.25" cy="8.04" rx="2.9" ry="1.3" transform="rotate(111.2 -35.25 8.04)"/><ellipse cx="-30.15" cy="13.08" rx="2.9" ry="1.3" transform="rotate(49.6 -30.15 13.08)"/><ellipse cx="-34.25" cy="13.98" rx="2.9" ry="1.3" transform="rotate(105.6 -34.25 13.98)"/><ellipse cx="-28.70" cy="18.39" rx="2.9" ry="1.3" transform="rotate(43.8 -28.70 18.39)"/><ellipse cx="-32.69" cy="19.70" rx="2.9" ry="1.3" transform="rotate(99.8 -32.69 19.70)"/><ellipse cx="-26.76" cy="23.40" rx="2.9" ry="1.3" transform="rotate(37.8 -26.76 23.40)"/><ellipse cx="-30.59" cy="25.12" rx="2.9" ry="1.3" transform="rotate(93.8 -30.59 25.12)"/><ellipse cx="-24.38" cy="28.00" rx="2.9" ry="1.3" transform="rotate(31.4 -24.38 28.00)"/><ellipse cx="-27.99" cy="30.14" rx="2.9" ry="1.3" transform="rotate(87.4 -27.99 30.14)"/><ellipse cx="-21.59" cy="32.13" rx="2.9" ry="1.3" transform="rotate(24.5 -21.59 32.13)"/><ellipse cx="-24.92" cy="34.69" rx="2.9" ry="1.3" transform="rotate(80.5 -24.92 34.69)"/><ellipse cx="-18.45" cy="35.72" rx="2.9" ry="1.3" transform="rotate(17.0 -18.45 35.72)"/><ellipse cx="-21.42" cy="38.69" rx="2.9" ry="1.3" transform="rotate(73.0 -21.42 38.69)"/><ellipse cx="-15.03" cy="38.70" rx="2.9" ry="1.3" transform="rotate(9.0 -15.03 38.70)"/><ellipse cx="-17.55" cy="42.06" rx="2.9" ry="1.3" transform="rotate(65.0 -17.55 42.06)"/><ellipse cx="-11.37" cy="41.05" rx="2.9" ry="1.3" transform="rotate(0.3 -11.37 41.05)"/><ellipse cx="-13.36" cy="44.75" rx="2.9" ry="1.3" transform="rotate(56.3 -13.36 44.75)"/><ellipse cx="-7.56" cy="42.72" rx="2.9" ry="1.3" transform="rotate(-9.0 -7.56 42.72)"/><ellipse cx="-8.92" cy="46.69" rx="2.9" ry="1.3" transform="rotate(47.0 -8.92 46.69)"/><ellipse cx="-3.64" cy="43.71" rx="2.9" ry="1.3" transform="rotate(-18.8 -3.64 43.71)"/><ellipse cx="-4.31" cy="47.85" rx="2.9" ry="1.3" transform="rotate(37.2 -4.31 47.85)"/><ellipse cx="0.32" cy="44.00" rx="2.9" ry="1.3" transform="rotate(-28.8 0.32 44.00)"/><ellipse cx="0.38" cy="48.20" rx="2.9" ry="1.3" transform="rotate(27.2 0.38 48.20)"/><ellipse cx="4.28" cy="43.59" rx="2.9" ry="1.3" transform="rotate(-38.8 4.28 43.59)"/><ellipse cx="5.07" cy="47.72" rx="2.9" ry="1.3" transform="rotate(17.2 5.07 47.72)"/></g><ellipse cx="0" cy="0" rx="28.2" ry="40" stroke-width="1.05"/><ellipse cx="0" cy="0" rx="30" ry="41.8" stroke-width="0.5" stroke-opacity="0.6"/><path d="M-11.64,-35.90H11.64M-17.77,-30.10H17.77M-21.65,-24.20H21.65M-24.13,-18.70H24.13M-25.99,-12.50H25.99M-27.01,-6.60H27.01M-27.40,-0.70H27.40" stroke="#7f86a2" stroke-width="1.25" stroke-linecap="butt"/><path d="M-9.2,-21.6C-9,-25.5 -4,-28.6 0.5,-28.3C5.5,-27.6 8.2,-21 9.8,-13.4C10.2,-11.6 6.5,-10.4 0,-10.9C-4.5,-10.6 -8.8,-11.6 -8.7,-13.8C-8.6,-16 -7.9,-17.6 -8.2,-19.2C-9.2,-19.6 -9.5,-20.6 -9.2,-21.6Z" fill="#e6e6e6" stroke-width="0.9"/><path d="M-8.2,-19.2C-5,-19 -2,-20.5 0,-23 M-8.5,-13.5C-3,-12.6 4,-13 9.5,-14" stroke-width="0.6" stroke-opacity="0.7"/><path d="M0,-12.6V5.6M0,18.4V32.2" stroke="#232d4f" stroke-width="2.1" stroke-linecap="butt"/><path d="M-26,11.2C-17,10.6 -9,7.6 -2.5,5.9 M26,11.2C17,10.6 9,7.6 3,5.9 M-23.6,21.4C-18,19.4 -13,16.2 -8.6,14 M23.6,21.4C18,19.4 14,16 10.2,14.2" stroke-width="0.8"/><path d="M-4.2,9.5C-2,7 2,7.2 4,8.6C7,10 9.5,12.6 10.4,14.4C8,17.2 4,18.6 1,18.2C-3,19 -7.4,17 -9,14.2C-8,12.6 -6,11.6 -4.2,9.5Z" fill="#e6e6e6" stroke-width="0.8"/><path d="M-7.5,13L-5,17.3M-5.6,12.3L-3,17.6M-3.6,11.8L-1,17.8M4.4,12L7.6,15.6M2.6,13.4L5.8,16.8M1,14.6L3.8,17.6M-3.8,9.9C-1.5,10.8 1,9.4 3.6,10.6" stroke-width="0.6" stroke-opacity="0.8"/><path d="M-5.3,42.6C-2,43.6 2,43.6 5.3,42.6L4.3,49.6H-4.3Z" fill="#232d4f" stroke="none"/><path d="M-3.2,49.2L-11.2,55.2M-1.6,49.8L-7.4,56.4M3.2,49.2L11.2,55.2M1.6,49.8L7.4,56.4" stroke="#232d4f" stroke-width="1.5"/><path d="M-11.2,55.2L-7.4,56.4M11.2,55.2L7.4,56.4" stroke="#232d4f" stroke-width="1.2"/></g></defs>
<circle cx="105.6" cy="1833.8" r="38.5" fill="none" stroke="#ffb400" stroke-width="18.4"/>
<polygon points="99.2,1821.9 100.1,1819.3 106.3,1816.2 114.7,1815.0 129.3,1816.2 140.8,1818.0 149.1,1818.8 156.4,1818.0 162.7,1815.9 166.4,1813.8 166.4,1845.9 163.2,1849.1 157.5,1851.8 149.1,1852.8 139.7,1852.2 129.3,1850.3 117.8,1848.7 108.4,1849.5 102.2,1851.8 99.2,1853.5" fill="#e6e6e6" stroke="#e6e6e6" stroke-width="5.5" stroke-linejoin="round"/>
<polygon points="99.2,1821.9 100.1,1819.3 106.3,1816.2 114.7,1815.0 129.3,1816.2 140.8,1818.0 149.1,1818.8 156.4,1818.0 162.7,1815.9 166.4,1813.8 166.4,1825.1 163.2,1828.4 157.5,1831.3 149.1,1832.4 139.7,1831.3 129.3,1829.5 117.8,1828.2 108.4,1829.0 102.2,1831.3 99.2,1833.0" fill="#0093d6"/>
<polygon points="99.2,1841.8 100.1,1840.2 106.3,1837.1 114.7,1835.9 129.3,1837.0 140.8,1838.4 149.1,1839.2 156.4,1838.4 162.7,1836.6 166.4,1834.3 166.4,1845.9 163.2,1849.1 157.5,1851.8 149.1,1852.8 139.7,1852.2 129.3,1850.3 117.8,1848.7 108.4,1849.5 102.2,1851.8 99.2,1853.5" fill="#0093d6"/>
<text class="lsans" x="177.8" y="1808.2" font-size="28.6" fill="#1c1c1c" stroke="#1c1c1c" stroke-width="0.45" textLength="113.2" lengthAdjust="spacingAndGlyphs">Servicio</text>
<text class="lsans" x="177.8" y="1834.5" font-size="28.6" fill="#1c1c1c" stroke="#1c1c1c" stroke-width="0.45" textLength="202.6" lengthAdjust="spacingAndGlyphs">Meteorológico</text>
<text class="lsans" x="177.8" y="1860.8" font-size="28.6" fill="#1c1c1c" stroke="#1c1c1c" stroke-width="0.45" textLength="121.6" lengthAdjust="spacingAndGlyphs">Nacional</text>
<text class="lsans" x="180.2" y="1880.4" font-size="17.6" fill="#1c1c1c" stroke="#1c1c1c" stroke-width="0.45" textLength="92.8" lengthAdjust="spacingAndGlyphs">Argentina</text>
<use href="#emb" x="0" y="0" transform="translate(532.8,1840.4) scale(0.985)" opacity="0.78"/>
<text class="lserif" x="582.6" y="1827.2" font-size="27.6" fill="#2a3354" textLength="132.6" lengthAdjust="spacingAndGlyphs" font-weight="bold">Ministerio</text>
<text class="lserif" x="583.0" y="1853.6" font-size="27.6" fill="#2a3354" textLength="133.6" lengthAdjust="spacingAndGlyphs" font-weight="bold">de Defensa</text>
<text class="lserif" x="583.6" y="1873.8" font-size="17.4" fill="#3a4262" stroke="#3a4262" stroke-width="0.35" textLength="149.6" lengthAdjust="spacingAndGlyphs">República Argentina</text>
<use href="#emb" x="0" y="0" transform="translate(894,1840.6)"/>
<text class="lserif" x="946.0" y="1827.2" font-size="28.2" fill="#232d4f" textLength="135.4" lengthAdjust="spacingAndGlyphs" font-weight="bold">Ministerio</text>
<text class="lserif" x="946.4" y="1853.6" font-size="28.2" fill="#232d4f" textLength="162.4" lengthAdjust="spacingAndGlyphs" font-weight="bold">de Economía</text>
<text class="lserif" x="946.6" y="1873.8" font-size="17.8" fill="#2c3556" stroke="#2c3556" stroke-width="0.35" textLength="152.8" lengthAdjust="spacingAndGlyphs">República Argentina</text>
</svg></body></html>
